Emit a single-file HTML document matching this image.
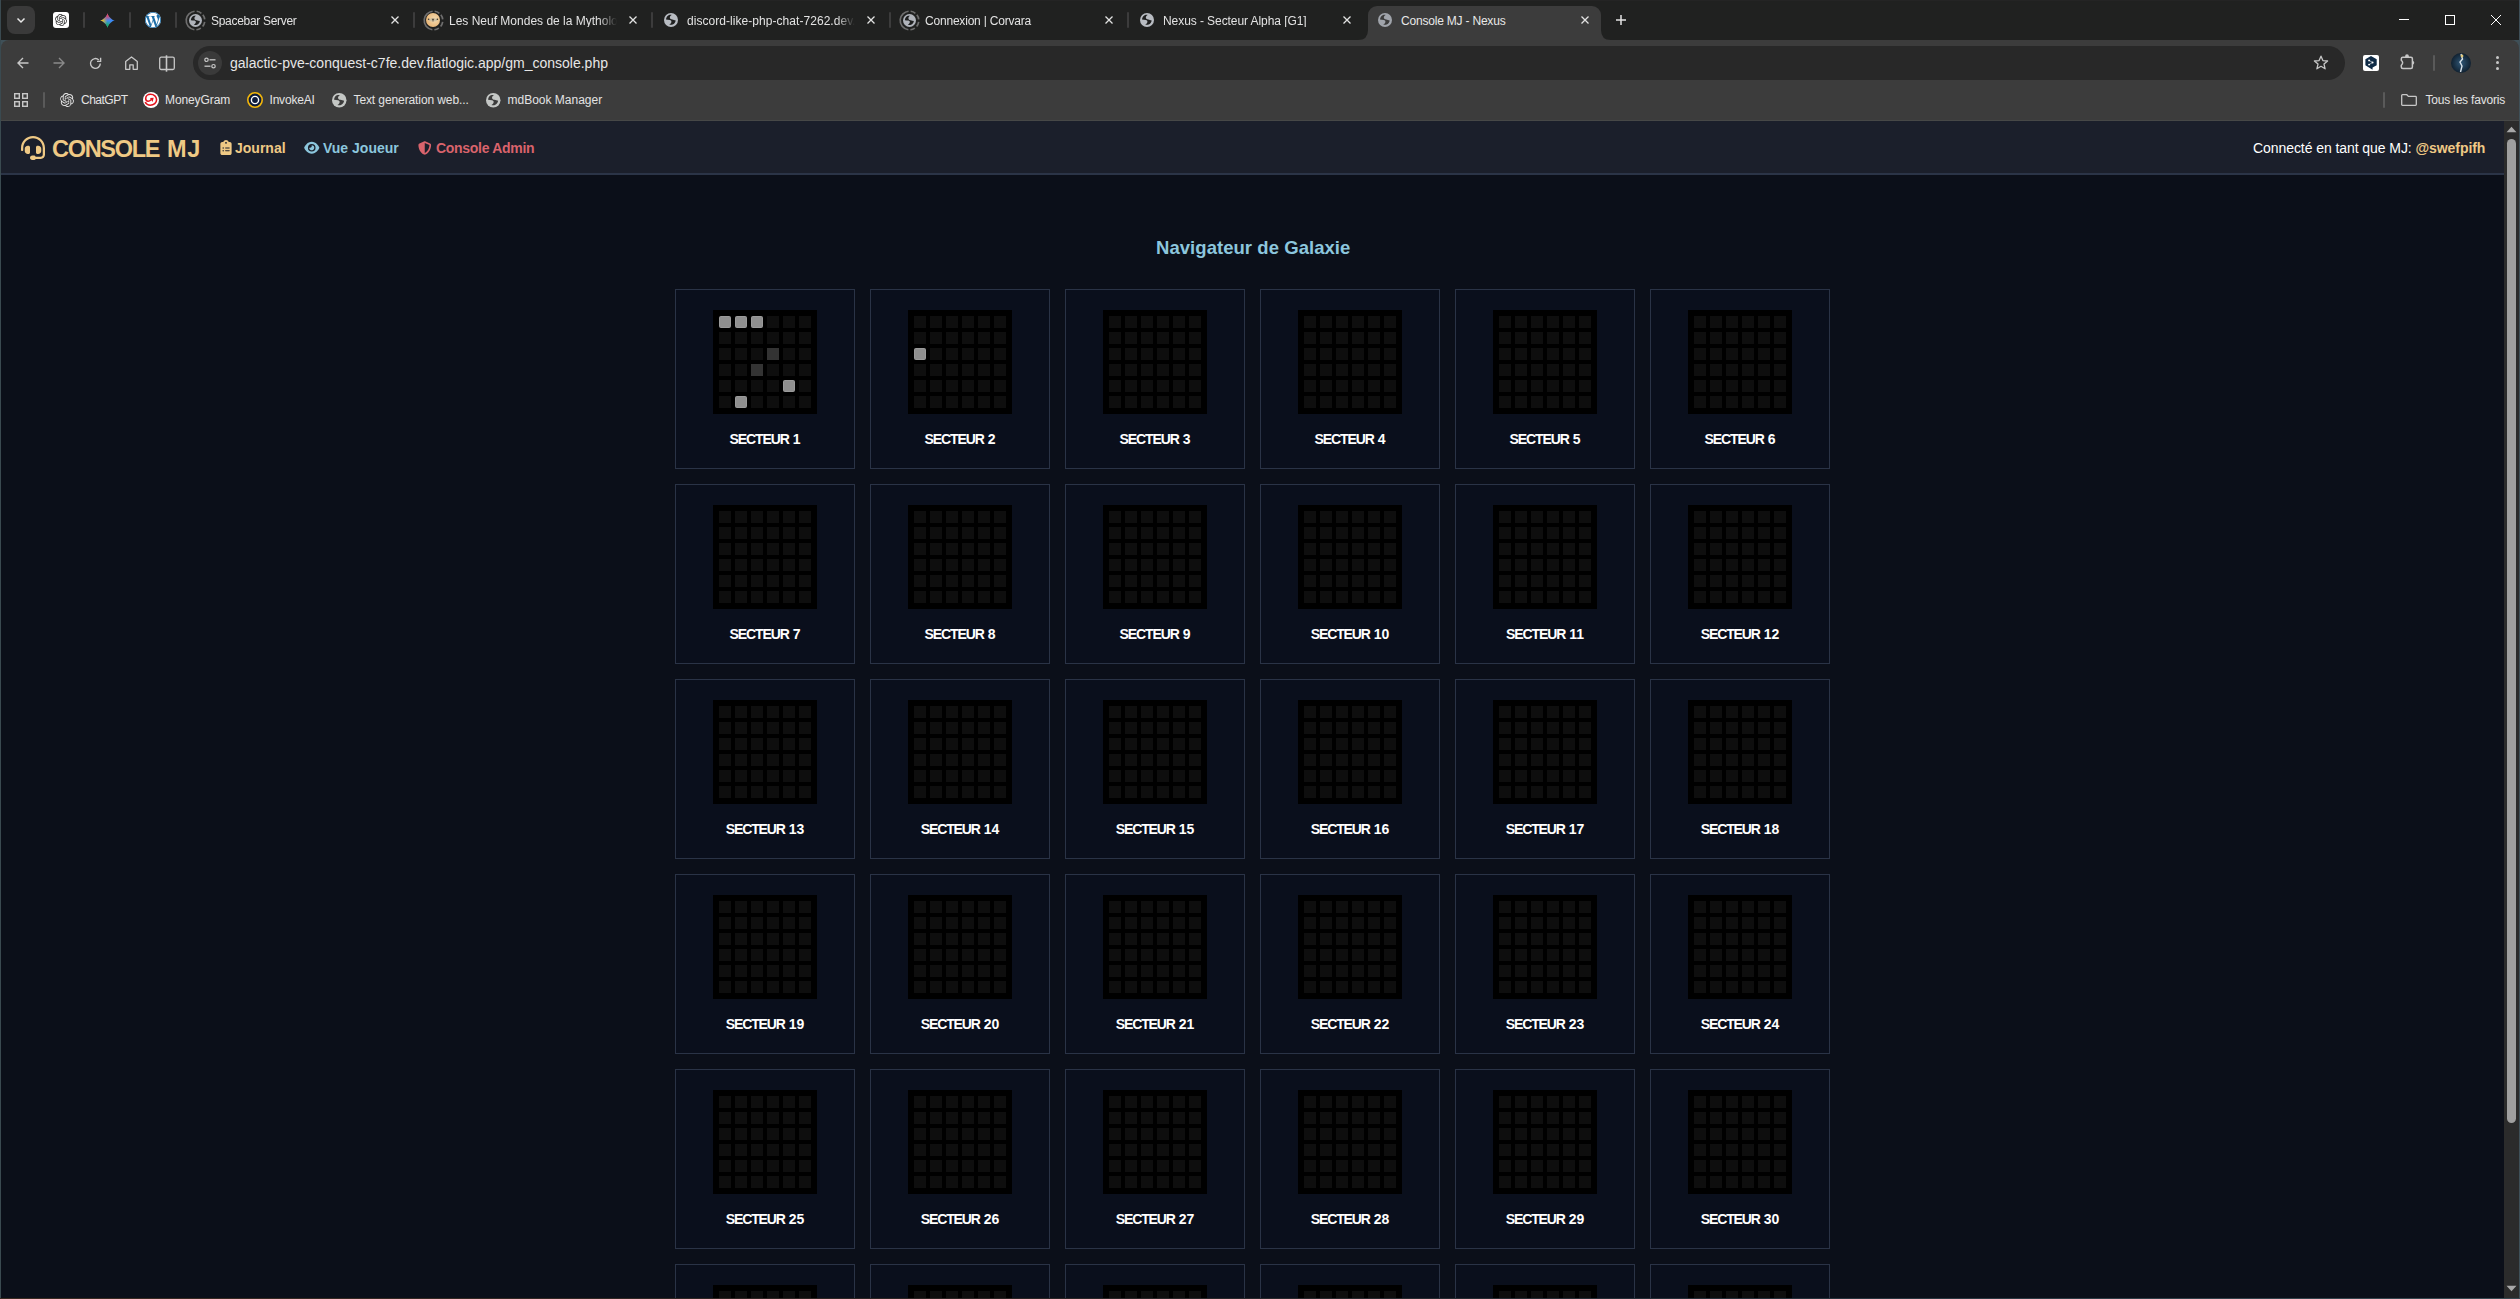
<!DOCTYPE html>
<html><head><meta charset="utf-8"><title>Console MJ - Nexus</title>
<style>
*{box-sizing:border-box;margin:0;padding:0}
html,body{width:2520px;height:1299px;overflow:hidden;background:#3f5058;font-family:"Liberation Sans",sans-serif}
.t{position:absolute;white-space:nowrap}
.a{position:absolute}
svg{position:absolute;overflow:visible}
</style></head><body>

<div class="a" style="left:0;top:0;width:1px;height:1299px;background:#3a4a50"></div>
<div class="a" style="left:1px;top:0;width:2518px;height:40px;background:#202120"></div>
<div class="a" style="left:1px;top:0;width:2518px;height:1px;background:#242424"></div>
<div class="a" style="left:0;top:1298px;width:2520px;height:1px;background:linear-gradient(90deg,#3a2a22,#2a2424 40%,#26303a 70%,#3a4a52)"></div>
<div class="a" style="left:1px;top:40px;width:2518px;height:81px;background:#3c3c3c;border-radius:8px 8px 0 0"></div>
<div class="a" style="left:1px;top:120px;width:2518px;height:1px;background:#474847"></div>
<div class="a" style="left:7px;top:6px;width:28px;height:28px;background:#3a3a3a;border-radius:8px"></div>
<svg style="left:15px;top:14px" width="12" height="12" viewBox="0 0 12 12"><path d="M2.5 4.5 L6 8 L9.5 4.5" fill="none" stroke="#e8e8e8" stroke-width="1.5"/></svg>
<div class="a" style="left:53px;top:12px;width:16px;height:16px;background:#fff;border-radius:3px"></div>
<svg style="left:55px;top:14px" width="12" height="12" viewBox="0 0 24 24"><path fill="#303030" d="M22.2819 9.8211a5.9847 5.9847 0 0 0-.5157-4.9108 6.0462 6.0462 0 0 0-6.5098-2.9A6.0651 6.0651 0 0 0 4.9807 4.1818a5.9847 5.9847 0 0 0-3.9977 2.9 6.0462 6.0462 0 0 0 .7427 7.0966 5.98 5.98 0 0 0 .511 4.9107 6.051 6.051 0 0 0 6.5146 2.9001A5.9847 5.9847 0 0 0 13.2599 24a6.0557 6.0557 0 0 0 5.7718-4.2058 5.9894 5.9894 0 0 0 3.9977-2.9001 6.0557 6.0557 0 0 0-.7475-7.0729zm-9.022 12.6081a4.4755 4.4755 0 0 1-2.8764-1.0408l.1419-.0804 4.7783-2.7582a.7948.7948 0 0 0 .3927-.6813v-6.7369l2.02 1.1686a.071.071 0 0 1 .038.052v5.5826a4.504 4.504 0 0 1-4.4945 4.4944zm-9.6607-4.1254a4.4708 4.4708 0 0 1-.5346-3.0137l.142.0852 4.783 2.7582a.7712.7712 0 0 0 .7806 0l5.8428-3.3685v2.3324a.0804.0804 0 0 1-.0332.0615L9.74 19.9502a4.4992 4.4992 0 0 1-6.1408-1.6464zM2.3408 7.8956a4.485 4.485 0 0 1 2.3655-1.9728V11.6a.7664.7664 0 0 0 .3879.6765l5.8144 3.3543-2.0201 1.1685a.0757.0757 0 0 1-.071 0l-4.8303-2.7865A4.504 4.504 0 0 1 2.3408 7.872zm16.5963 3.8558L13.1038 8.364 15.1192 7.2a.0757.0757 0 0 1 .071 0l4.8303 2.7913a4.4944 4.4944 0 0 1-.6765 8.1042v-5.6772a.79.79 0 0 0-.407-.667zm2.0107-3.0231l-.142-.0852-4.7735-2.7818a.7759.7759 0 0 0-.7854 0L9.409 9.2297V6.8974a.0662.0662 0 0 1 .0284-.0615l4.8303-2.7866a4.4992 4.4992 0 0 1 6.6802 4.66zM8.3065 12.863l-2.02-1.1638a.0804.0804 0 0 1-.038-.0567V6.0742a4.4992 4.4992 0 0 1 7.3757-3.4537l-.142.0805L8.704 5.459a.7948.7948 0 0 0-.3927.6813zm1.0976-2.3654l2.602-1.4998 2.6069 1.4998v2.9994l-2.5974 1.4997-2.6067-1.4997Z"/></svg>
<div class="a sep" style="left:83px;top:12px;width:2px;height:16px;background:#3c3c3c;border-radius:1px"></div>
<svg style="left:99.5px;top:12.5px" width="15" height="15" viewBox="0 0 16 16"><defs>
<clipPath id="gst"><path d="M8 0.2 C8.3 3.2 12.8 7.7 15.8 8 C12.8 8.3 8.3 12.8 8 15.8 C7.7 12.8 3.2 8.3 0.2 8 C3.2 7.7 7.7 3.2 8 0.2Z"/></clipPath>
<radialGradient id="gr1" cx="8" cy="0.5" r="8" gradientUnits="userSpaceOnUse"><stop offset="0.2" stop-color="#f43f4f"/><stop offset="1" stop-color="#f43f4f" stop-opacity="0"/></radialGradient>
<radialGradient id="gr2" cx="0.5" cy="8" r="7.5" gradientUnits="userSpaceOnUse"><stop offset="0.2" stop-color="#fdc108"/><stop offset="1" stop-color="#fdc108" stop-opacity="0"/></radialGradient>
<radialGradient id="gr3" cx="8" cy="15.5" r="7.5" gradientUnits="userSpaceOnUse"><stop offset="0.2" stop-color="#17b24f"/><stop offset="1" stop-color="#17b24f" stop-opacity="0"/></radialGradient>
</defs><g clip-path="url(#gst)"><rect width="16" height="16" fill="#3d8af5"/><rect width="16" height="16" fill="url(#gr3)"/><rect width="16" height="16" fill="url(#gr2)"/><rect width="16" height="16" fill="url(#gr1)"/></g></svg>
<div class="a" style="left:129px;top:12px;width:2px;height:16px;background:#3c3c3c;border-radius:1px"></div>
<svg style="left:145px;top:12px" width="16" height="16" viewBox="0 0 24 24"><circle cx="12" cy="12" r="12" fill="#fff"/><path fill="#1f6fa8" d="M21.469 6.825c.84 1.537 1.318 3.3 1.318 5.175 0 3.979-2.156 7.456-5.363 9.325l3.295-9.527c.615-1.54.82-2.771.82-3.864 0-.405-.026-.78-.07-1.11m-7.981.105c.647-.03 1.232-.105 1.232-.105.582-.075.514-.93-.067-.899 0 0-1.755.135-2.88.135-1.064 0-2.85-.15-2.85-.15-.585-.03-.661.855-.075.885 0 0 .54.061 1.125.09l1.68 4.605-2.37 7.08L5.354 6.9c.649-.03 1.234-.1 1.234-.1.585-.075.516-.93-.065-.896 0 0-1.746.138-2.874.138-.2 0-.438-.008-.69-.015C4.911 3.15 8.235 1.215 12 1.215c2.809 0 5.365 1.072 7.286 2.833-.046-.003-.091-.009-.141-.009-1.06 0-1.812.923-1.812 1.914 0 .89.513 1.643 1.06 2.531.411.72.89 1.643.89 2.977 0 .915-.354 1.994-.821 3.479l-1.075 3.585-3.9-11.61.001.014zM12 22.784c-1.059 0-2.081-.153-3.048-.437l3.237-9.406 3.315 9.087c.024.053.05.101.078.149-1.12.393-2.325.609-3.582.609M1.211 12c0-1.564.336-3.05.935-4.39L7.29 21.709C3.694 19.96 1.212 16.271 1.211 12M12 0C5.385 0 0 5.385 0 12s5.385 12 12 12 12-5.385 12-12S18.615 0 12 0"/></svg>
<div class="a" style="left:175px;top:12px;width:2px;height:16px;background:#3c3c3c;border-radius:1px"></div>
<svg style="left:184.5px;top:9.5px" width="21" height="21" viewBox="0 0 21 21"><circle cx="10.5" cy="10.5" r="9.3" fill="none" stroke="#6e6e6e" stroke-width="1.7" stroke-dasharray="26.94 2.11 5.19 2.11 4.87 2.60 5.03 2.43 4.71 2.27" transform="rotate(97 10.5 10.5)"/></svg>
<svg style="left:188.5px;top:13.5px" width="13" height="13" viewBox="0 0 14 14"><circle cx="7" cy="7" r="7" fill="#b0b4bb"/><path d="M2.0 6.6 C2.2 4.6 3.0 3.0 4.6 2.2 C5.6 1.8 6.8 1.8 7.7 1.9 C6.4 2.6 5.6 3.8 5.9 5.0 C6.1 5.8 6.9 6.3 8.2 6.6 C9.4 6.9 10.6 7.2 11.7 7.5 C11.5 9.3 10.3 10.9 8.6 11.6 C7.5 12.0 6.2 11.9 5.2 11.5 C6.4 11.0 7.3 10.0 7.4 8.7 C7.4 7.9 6.8 7.4 5.8 7.1 C4.6 6.8 3.2 6.7 2.0 6.6 Z" fill="#1f2020"/></svg>
<div class="t" style="left:211px;top:15.04px;font-size:12px;line-height:12px;color:#e3e3e3;font-weight:normal;letter-spacing:-0.3px;width:168px;overflow:hidden;-webkit-mask-image:linear-gradient(90deg,#000 150px,transparent 168px);">Spacebar Server</div>
<svg style="left:391px;top:16px" width="8" height="8" viewBox="0 0 8 8"><path d="M0.5 0.5 L7.5 7.5 M7.5 0.5 L0.5 7.5" stroke="#e3e3e3" stroke-width="1.3" fill="none"/></svg>
<svg style="left:422.5px;top:9.5px" width="21" height="21" viewBox="0 0 21 21"><circle cx="10.5" cy="10.5" r="9.3" fill="none" stroke="#6e6e6e" stroke-width="1.7" stroke-dasharray="26.94 2.11 5.19 2.11 4.87 2.60 5.03 2.43 4.71 2.27" transform="rotate(97 10.5 10.5)"/></svg>
<svg style="left:426px;top:13px" width="14" height="14" viewBox="0 0 14 14"><defs><radialGradient id="fc" cx="0.6" cy="0.45" r="0.6"><stop offset="0" stop-color="#f3dcb4"/><stop offset="1" stop-color="#e9b676"/></radialGradient></defs><circle cx="7" cy="7" r="7" fill="url(#fc)"/><ellipse cx="7" cy="6.8" rx="4.6" ry="1.6" fill="#c9bfa2" opacity="0.8"/><circle cx="2.6" cy="6.2" r="0.8" fill="#3a3328"/><circle cx="11.4" cy="6.2" r="0.8" fill="#3a3328"/><path d="M5.6 5.8 H8.4 L7.4 7.4 V8.6 H6.6 V7.4 Z" fill="#5a4a38"/></svg>
<div class="t" style="left:449px;top:15.04px;font-size:12px;line-height:12px;color:#e3e3e3;font-weight:normal;width:168px;overflow:hidden;-webkit-mask-image:linear-gradient(90deg,#000 150px,transparent 168px);">Les Neuf Mondes de la Mythologie</div>
<svg style="left:629px;top:16px" width="8" height="8" viewBox="0 0 8 8"><path d="M0.5 0.5 L7.5 7.5 M7.5 0.5 L0.5 7.5" stroke="#e3e3e3" stroke-width="1.3" fill="none"/></svg>
<svg style="left:664.0px;top:13.0px" width="14" height="14" viewBox="0 0 14 14"><circle cx="7" cy="7" r="7" fill="#b8bcc2"/><path d="M2.0 6.6 C2.2 4.6 3.0 3.0 4.6 2.2 C5.6 1.8 6.8 1.8 7.7 1.9 C6.4 2.6 5.6 3.8 5.9 5.0 C6.1 5.8 6.9 6.3 8.2 6.6 C9.4 6.9 10.6 7.2 11.7 7.5 C11.5 9.3 10.3 10.9 8.6 11.6 C7.5 12.0 6.2 11.9 5.2 11.5 C6.4 11.0 7.3 10.0 7.4 8.7 C7.4 7.9 6.8 7.4 5.8 7.1 C4.6 6.8 3.2 6.7 2.0 6.6 Z" fill="#1f2020"/></svg>
<div class="t" style="left:687px;top:15.04px;font-size:12px;line-height:12px;color:#e3e3e3;font-weight:normal;letter-spacing:0.05px;width:168px;overflow:hidden;-webkit-mask-image:linear-gradient(90deg,#000 150px,transparent 168px);">discord-like-php-chat-7262.dev.flatlogic.app</div>
<svg style="left:867px;top:16px" width="8" height="8" viewBox="0 0 8 8"><path d="M0.5 0.5 L7.5 7.5 M7.5 0.5 L0.5 7.5" stroke="#e3e3e3" stroke-width="1.3" fill="none"/></svg>
<svg style="left:898.5px;top:9.5px" width="21" height="21" viewBox="0 0 21 21"><circle cx="10.5" cy="10.5" r="9.3" fill="none" stroke="#6e6e6e" stroke-width="1.7" stroke-dasharray="26.94 2.11 5.19 2.11 4.87 2.60 5.03 2.43 4.71 2.27" transform="rotate(97 10.5 10.5)"/></svg>
<svg style="left:902.5px;top:13.5px" width="13" height="13" viewBox="0 0 14 14"><circle cx="7" cy="7" r="7" fill="#b0b4bb"/><path d="M2.0 6.6 C2.2 4.6 3.0 3.0 4.6 2.2 C5.6 1.8 6.8 1.8 7.7 1.9 C6.4 2.6 5.6 3.8 5.9 5.0 C6.1 5.8 6.9 6.3 8.2 6.6 C9.4 6.9 10.6 7.2 11.7 7.5 C11.5 9.3 10.3 10.9 8.6 11.6 C7.5 12.0 6.2 11.9 5.2 11.5 C6.4 11.0 7.3 10.0 7.4 8.7 C7.4 7.9 6.8 7.4 5.8 7.1 C4.6 6.8 3.2 6.7 2.0 6.6 Z" fill="#1f2020"/></svg>
<div class="t" style="left:925px;top:15.04px;font-size:12px;line-height:12px;color:#e3e3e3;font-weight:normal;letter-spacing:-0.2px;width:168px;overflow:hidden;-webkit-mask-image:linear-gradient(90deg,#000 150px,transparent 168px);">Connexion | Corvara</div>
<svg style="left:1105px;top:16px" width="8" height="8" viewBox="0 0 8 8"><path d="M0.5 0.5 L7.5 7.5 M7.5 0.5 L0.5 7.5" stroke="#e3e3e3" stroke-width="1.3" fill="none"/></svg>
<svg style="left:1140.0px;top:13.0px" width="14" height="14" viewBox="0 0 14 14"><circle cx="7" cy="7" r="7" fill="#b8bcc2"/><path d="M2.0 6.6 C2.2 4.6 3.0 3.0 4.6 2.2 C5.6 1.8 6.8 1.8 7.7 1.9 C6.4 2.6 5.6 3.8 5.9 5.0 C6.1 5.8 6.9 6.3 8.2 6.6 C9.4 6.9 10.6 7.2 11.7 7.5 C11.5 9.3 10.3 10.9 8.6 11.6 C7.5 12.0 6.2 11.9 5.2 11.5 C6.4 11.0 7.3 10.0 7.4 8.7 C7.4 7.9 6.8 7.4 5.8 7.1 C4.6 6.8 3.2 6.7 2.0 6.6 Z" fill="#1f2020"/></svg>
<div class="t" style="left:1163px;top:15.04px;font-size:12px;line-height:12px;color:#e3e3e3;font-weight:normal;letter-spacing:-0.07px;width:168px;overflow:hidden;-webkit-mask-image:linear-gradient(90deg,#000 150px,transparent 168px);">Nexus - Secteur Alpha [G1]</div>
<svg style="left:1343px;top:16px" width="8" height="8" viewBox="0 0 8 8"><path d="M0.5 0.5 L7.5 7.5 M7.5 0.5 L0.5 7.5" stroke="#e3e3e3" stroke-width="1.3" fill="none"/></svg>
<div class="a" style="left:413px;top:12px;width:2px;height:16px;background:#3c3c3c;border-radius:1px"></div>
<div class="a" style="left:651px;top:12px;width:2px;height:16px;background:#3c3c3c;border-radius:1px"></div>
<div class="a" style="left:889px;top:12px;width:2px;height:16px;background:#3c3c3c;border-radius:1px"></div>
<div class="a" style="left:1127px;top:12px;width:2px;height:16px;background:#3c3c3c;border-radius:1px"></div>
<div class="a" style="left:1368px;top:6px;width:233px;height:34px;background:#3c3c3c;border-radius:9px 9px 0 0"></div>
<svg style="left:1358px;top:30px" width="10" height="10" viewBox="0 0 10 10"><path d="M0 10 Q10 10 10 0 L10 10Z" fill="#3c3c3c"/></svg>
<svg style="left:1601px;top:30px" width="10" height="10" viewBox="0 0 10 10"><path d="M10 10 Q0 10 0 0 L0 10Z" fill="#3c3c3c"/></svg>
<svg style="left:1378.0px;top:13.0px" width="14" height="14" viewBox="0 0 14 14"><circle cx="7" cy="7" r="7" fill="#a0a4ab"/><path d="M2.0 6.6 C2.2 4.6 3.0 3.0 4.6 2.2 C5.6 1.8 6.8 1.8 7.7 1.9 C6.4 2.6 5.6 3.8 5.9 5.0 C6.1 5.8 6.9 6.3 8.2 6.6 C9.4 6.9 10.6 7.2 11.7 7.5 C11.5 9.3 10.3 10.9 8.6 11.6 C7.5 12.0 6.2 11.9 5.2 11.5 C6.4 11.0 7.3 10.0 7.4 8.7 C7.4 7.9 6.8 7.4 5.8 7.1 C4.6 6.8 3.2 6.7 2.0 6.6 Z" fill="#3c3c3c"/></svg>
<div class="t" style="left:1401px;top:15.04px;font-size:12px;line-height:12px;color:#e8e8e8;font-weight:normal;letter-spacing:-0.2px;">Console MJ - Nexus</div>
<svg style="left:1581px;top:16px" width="8" height="8" viewBox="0 0 8 8"><path d="M0.5 0.5 L7.5 7.5 M7.5 0.5 L0.5 7.5" stroke="#e3e3e3" stroke-width="1.3" fill="none"/></svg>
<svg style="left:1616px;top:15px" width="10" height="10" viewBox="0 0 10 10"><path d="M5 0 V10 M0 5 H10" stroke="#e3e3e3" stroke-width="1.5"/></svg>
<div class="a" style="left:2399px;top:19px;width:10px;height:1px;background:#fff"></div>
<div class="a" style="left:2445px;top:15px;width:10px;height:10px;border:1px solid #fff"></div>
<svg style="left:2491px;top:15px" width="10" height="10" viewBox="0 0 10 10"><path d="M0 0 L10 10 M10 0 L0 10" stroke="#fff" stroke-width="1"/></svg>
<svg style="left:17px;top:57px" width="12" height="12" viewBox="0 0 12 12"><path d="M11.5 6 H1.2 M6 1 L1 6 L6 11" fill="none" stroke="#c7c7c7" stroke-width="1.4"/></svg>
<svg style="left:53px;top:57px" width="12" height="12" viewBox="0 0 12 12"><path d="M0.5 6 H10.8 M6 1 L11 6 L6 11" fill="none" stroke="#8a8a8a" stroke-width="1.4"/></svg>
<svg style="left:89px;top:57px" width="13" height="13" viewBox="0 0 13 13"><path d="M11.3 6.5 A4.9 4.9 0 1 1 9.8 2.9" fill="none" stroke="#c7c7c7" stroke-width="1.4"/><path d="M11.6 0.8 V4.4 H8" fill="none" stroke="#c7c7c7" stroke-width="1.4"/></svg>
<svg style="left:125px;top:56px" width="13" height="14" viewBox="0 0 13 14"><path d="M0.7 13.3 V5.6 L6.5 0.9 L12.3 5.6 V13.3 H8.2 V8.8 H4.8 V13.3 Z" fill="none" stroke="#c7c7c7" stroke-width="1.3" stroke-linejoin="round"/></svg>
<svg style="left:159px;top:55px" width="16" height="17" viewBox="0 0 16 17"><rect x="0.7" y="2.2" width="14.6" height="12.3" rx="1.5" fill="none" stroke="#c7c7c7" stroke-width="1.3"/><path d="M7.5 0.3 V16.7" stroke="#c7c7c7" stroke-width="1.6"/><rect x="8.2" y="2.8" width="0" height="0"/></svg>
<div class="a" style="left:193px;top:46px;width:2152px;height:34px;background:#282828;border-radius:17px"></div>
<div class="a" style="left:198px;top:51px;width:24px;height:24px;background:#3a3a3a;border-radius:12px"></div>
<svg style="left:203px;top:56px" width="14" height="14" viewBox="0 0 14 14"><circle cx="3.5" cy="3.8" r="1.7" fill="none" stroke="#c7c7c7" stroke-width="1.2"/><path d="M6.5 3.8 H12.5" stroke="#c7c7c7" stroke-width="1.3"/><circle cx="10.5" cy="10.2" r="1.7" fill="none" stroke="#c7c7c7" stroke-width="1.2"/><path d="M1.5 10.2 H7.5" stroke="#c7c7c7" stroke-width="1.3"/></svg>
<div class="t" style="left:230px;top:56.35px;font-size:14px;line-height:14px;color:#e6e6e6;font-weight:normal;">galactic-pve-conquest-c7fe.dev.flatlogic.app/gm_console.php</div>
<svg style="left:2313px;top:55px" width="16" height="16" viewBox="0 0 16 16"><path d="M8 1.2 L9.9 5.6 L14.6 6 L11 9.1 L12.1 13.8 L8 11.3 L3.9 13.8 L5 9.1 L1.4 6 L6.1 5.6 Z" fill="none" stroke="#c7c7c7" stroke-width="1.3" stroke-linejoin="round"/></svg>
<div class="a" style="left:2363px;top:55px;width:16px;height:16px;background:#fff;border-radius:2px"></div>
<svg style="left:2363px;top:55px" width="16" height="16" viewBox="0 0 16 16"><path d="M8 1 L13.7 4.2 V10.3 L9.6 12.6 L9.5 14.8 L7.6 13.4 L2.4 10.3 V4.2 Z" fill="#0f2b46"/><path d="M6.1 5.4 L9.6 7.5 L6.1 9.6" fill="none" stroke="#fff" stroke-width="0.6"/><circle cx="6.1" cy="5.4" r="0.95" fill="#fff"/><circle cx="6.1" cy="9.6" r="0.95" fill="#fff"/><circle cx="9.6" cy="7.5" r="0.95" fill="#fff"/></svg>
<svg style="left:2399px;top:53px" width="18" height="18" viewBox="0 0 18 18"><path d="M3.8 4.2 H11.9 Q13.4 4.2 13.4 5.7 V14 Q13.4 15.5 11.9 15.5 H3.8 Q2.3 15.5 2.3 14 V12.3 Q5.0 9.8 2.3 7.3 V5.7 Q2.3 4.2 3.8 4.2 Z" fill="none" stroke="#c7c7c7" stroke-width="1.5"/><path d="M6.1 4.5 V3.2 A1.9 1.9 0 0 1 9.9 3.2 V4.5 Z M13.2 7.3 Q17.4 9.8 13.2 12.3 Z" fill="#c7c7c7"/></svg>
<div class="a" style="left:2433px;top:55px;width:2px;height:16px;background:#5a5a5a;border-radius:1px"></div>
<svg style="left:2451px;top:53px" width="20" height="20" viewBox="0 0 20 20"><defs><radialGradient id="av" cx="0.5" cy="0.5" r="0.6"><stop offset="0" stop-color="#2f5676"/><stop offset="1" stop-color="#0a1622"/></radialGradient></defs><circle cx="10" cy="10" r="10" fill="url(#av)"/><path d="M10 1 L11.5 6 L9 9 L11 13 L9.5 19" fill="none" stroke="#d8e2ea" stroke-width="1.4"/><circle cx="11" cy="3" r="1.4" fill="#e0c87a"/></svg>
<div class="a" style="left:2495.5px;top:55.8px;width:3px;height:3px;border-radius:50%;background:#c7c7c7"></div>
<div class="a" style="left:2495.5px;top:61.3px;width:3px;height:3px;border-radius:50%;background:#c7c7c7"></div>
<div class="a" style="left:2495.5px;top:66.8px;width:3px;height:3px;border-radius:50%;background:#c7c7c7"></div>
<svg style="left:14px;top:93px" width="14" height="14" viewBox="0 0 14 14"><g fill="none" stroke="#c7c7c7" stroke-width="1.4"><rect x="0.7" y="0.7" width="4.6" height="4.6"/><rect x="8.7" y="0.7" width="4.6" height="4.6"/><rect x="0.7" y="8.7" width="4.6" height="4.6"/><rect x="8.7" y="8.7" width="4.6" height="4.6"/></g></svg>
<div class="a" style="left:43px;top:92px;width:2px;height:16px;background:#5a5a5a;border-radius:1px"></div>
<svg style="left:60px;top:93px" width="14" height="14" viewBox="0 0 24 24"><path fill="#e8e8e8" d="M22.2819 9.8211a5.9847 5.9847 0 0 0-.5157-4.9108 6.0462 6.0462 0 0 0-6.5098-2.9A6.0651 6.0651 0 0 0 4.9807 4.1818a5.9847 5.9847 0 0 0-3.9977 2.9 6.0462 6.0462 0 0 0 .7427 7.0966 5.98 5.98 0 0 0 .511 4.9107 6.051 6.051 0 0 0 6.5146 2.9001A5.9847 5.9847 0 0 0 13.2599 24a6.0557 6.0557 0 0 0 5.7718-4.2058 5.9894 5.9894 0 0 0 3.9977-2.9001 6.0557 6.0557 0 0 0-.7475-7.0729zm-9.022 12.6081a4.4755 4.4755 0 0 1-2.8764-1.0408l.1419-.0804 4.7783-2.7582a.7948.7948 0 0 0 .3927-.6813v-6.7369l2.02 1.1686a.071.071 0 0 1 .038.052v5.5826a4.504 4.504 0 0 1-4.4945 4.4944zm-9.6607-4.1254a4.4708 4.4708 0 0 1-.5346-3.0137l.142.0852 4.783 2.7582a.7712.7712 0 0 0 .7806 0l5.8428-3.3685v2.3324a.0804.0804 0 0 1-.0332.0615L9.74 19.9502a4.4992 4.4992 0 0 1-6.1408-1.6464zM2.3408 7.8956a4.485 4.485 0 0 1 2.3655-1.9728V11.6a.7664.7664 0 0 0 .3879.6765l5.8144 3.3543-2.0201 1.1685a.0757.0757 0 0 1-.071 0l-4.8303-2.7865A4.504 4.504 0 0 1 2.3408 7.872zm16.5963 3.8558L13.1038 8.364 15.1192 7.2a.0757.0757 0 0 1 .071 0l4.8303 2.7913a4.4944 4.4944 0 0 1-.6765 8.1042v-5.6772a.79.79 0 0 0-.407-.667zm2.0107-3.0231l-.142-.0852-4.7735-2.7818a.7759.7759 0 0 0-.7854 0L9.409 9.2297V6.8974a.0662.0662 0 0 1 .0284-.0615l4.8303-2.7866a4.4992 4.4992 0 0 1 6.6802 4.66zM8.3065 12.863l-2.02-1.1638a.0804.0804 0 0 1-.038-.0567V6.0742a4.4992 4.4992 0 0 1 7.3757-3.4537l-.142.0805L8.704 5.459a.7948.7948 0 0 0-.3927.6813zm1.0976-2.3654l2.602-1.4998 2.6069 1.4998v2.9994l-2.5974 1.4997-2.6067-1.4997Z"/></svg>
<div class="t" style="left:81px;top:93.54px;font-size:12px;line-height:12px;color:#e3e3e3;font-weight:normal;letter-spacing:-0.5px;">ChatGPT</div>
<svg style="left:143px;top:92px" width="16" height="16" viewBox="0 0 16 16"><circle cx="8" cy="8" r="8" fill="#fff"/><path d="M2.1 10.2 C3.5 12.5 5.5 13.3 7.2 13.3 C10.8 13.3 13.6 10.8 13.6 7.8 C13.6 4.5 11 2.3 7.5 2.3 C4.6 2.3 2.7 4.3 2.7 6.5 C2.7 8.2 3.8 9.2 5.1 9.2 C6.4 9.2 7.4 8.4 8.4 7.5" fill="none" stroke="#e4111b" stroke-width="1.55"/><path d="M7.0 6.0 L10.7 5.7 L9.6 9.9Z" fill="#e4111b"/></svg>
<div class="t" style="left:165px;top:93.54px;font-size:12px;line-height:12px;color:#e3e3e3;font-weight:normal;letter-spacing:-0.1px;">MoneyGram</div>
<svg style="left:247px;top:92px" width="16" height="16" viewBox="0 0 16 16"><circle cx="8" cy="8" r="7.2" fill="#0d1a3a" stroke="#f3b70b" stroke-width="1.6"/><circle cx="8" cy="8" r="3.6" fill="none" stroke="#fff" stroke-width="1.4"/></svg>
<div class="t" style="left:269.5px;top:93.54px;font-size:12px;line-height:12px;color:#e3e3e3;font-weight:normal;letter-spacing:-0.2px;">InvokeAI</div>
<svg style="left:331.75px;top:92.75px" width="14.5" height="14.5" viewBox="0 0 14 14"><circle cx="7" cy="7" r="7" fill="#c4c7c5"/><path d="M2.0 6.6 C2.2 4.6 3.0 3.0 4.6 2.2 C5.6 1.8 6.8 1.8 7.7 1.9 C6.4 2.6 5.6 3.8 5.9 5.0 C6.1 5.8 6.9 6.3 8.2 6.6 C9.4 6.9 10.6 7.2 11.7 7.5 C11.5 9.3 10.3 10.9 8.6 11.6 C7.5 12.0 6.2 11.9 5.2 11.5 C6.4 11.0 7.3 10.0 7.4 8.7 C7.4 7.9 6.8 7.4 5.8 7.1 C4.6 6.8 3.2 6.7 2.0 6.6 Z" fill="#3c3c3c"/></svg>
<div class="t" style="left:353.5px;top:93.54px;font-size:12px;line-height:12px;color:#e3e3e3;font-weight:normal;letter-spacing:-0.1px;">Text generation web...</div>
<svg style="left:485.75px;top:92.75px" width="14.5" height="14.5" viewBox="0 0 14 14"><circle cx="7" cy="7" r="7" fill="#c4c7c5"/><path d="M2.0 6.6 C2.2 4.6 3.0 3.0 4.6 2.2 C5.6 1.8 6.8 1.8 7.7 1.9 C6.4 2.6 5.6 3.8 5.9 5.0 C6.1 5.8 6.9 6.3 8.2 6.6 C9.4 6.9 10.6 7.2 11.7 7.5 C11.5 9.3 10.3 10.9 8.6 11.6 C7.5 12.0 6.2 11.9 5.2 11.5 C6.4 11.0 7.3 10.0 7.4 8.7 C7.4 7.9 6.8 7.4 5.8 7.1 C4.6 6.8 3.2 6.7 2.0 6.6 Z" fill="#3c3c3c"/></svg>
<div class="t" style="left:507.5px;top:93.54px;font-size:12px;line-height:12px;color:#e3e3e3;font-weight:normal;">mdBook Manager</div>
<div class="a" style="left:2383px;top:92px;width:2px;height:16px;background:#5a5a5a;border-radius:1px"></div>
<svg style="left:2401px;top:94px" width="16" height="12" viewBox="0 0 16 12"><path d="M0.7 1.5 Q0.7 0.7 1.5 0.7 H5.8 L7.4 2.4 H14.5 Q15.3 2.4 15.3 3.2 V10.5 Q15.3 11.3 14.5 11.3 H1.5 Q0.7 11.3 0.7 10.5 Z" fill="none" stroke="#c7c7c7" stroke-width="1.3"/></svg>
<div class="t" style="left:2425.5px;top:93.54px;font-size:12px;line-height:12px;color:#e3e3e3;font-weight:normal;letter-spacing:-0.2px;">Tous les favoris</div>
<div class="a" style="left:1px;top:121px;width:2503px;height:1177px;background:#0b0f19;overflow:hidden">
<div class="a" style="left:0;top:0;width:2503px;height:52px;background:#1b1f2b"></div>
<div class="a" style="left:0;top:52px;width:2503px;height:2px;background:#2b3447"></div>
<svg style="left:20px;top:15px" width="24" height="24" viewBox="0 0 512 512"><path fill="#efc985" d="M256 48C141.1 48 48 141.1 48 256v40c0 13.3-10.7 24-24 24S0 309.3 0 296V256C0 114.6 114.6 0 256 0S512 114.6 512 256V400.1c0 48.6-39.4 88-88.1 88L313.6 488c-8.3 14.3-23.8 24-41.6 24H240c-26.5 0-48-21.5-48-48s21.5-48 48-48h32c17.8 0 33.3 9.7 41.6 24l110.4 .1c22.1 0 40-17.9 40-40V256c0-114.9-93.1-208-208-208zM144 208h16c17.7 0 32 14.3 32 32V352c0 17.7-14.3 32-32 32H144c-35.3 0-64-28.7-64-64V272c0-35.3 28.7-64 64-64zm224 0c35.3 0 64 28.7 64 64v48c0 35.3-28.7 64-64 64H352c-17.7 0-32-14.3-32-32V240c0-17.7 14.3-32 32-32h16z"/></svg>
<div class="t" style="left:51px;top:17.11px;font-size:23.5px;line-height:23.5px;color:#efc985;font-weight:bold;"><span style="letter-spacing:-1.3px">CONSOLE</span> <span style="letter-spacing:0.7px;margin-left:1.3px">MJ</span></div>
<svg style="left:219px;top:19px" width="12" height="15" viewBox="0 0 384 512"><path fill="#efc985" d="M192 0c-41.8 0-77.4 26.7-90.5 64H64C28.7 64 0 92.7 0 128V448c0 35.3 28.7 64 64 64H320c35.3 0 64-28.7 64-64V128c0-35.3-28.7-64-64-64H282.5C269.4 26.7 233.8 0 192 0zm0 64a32 32 0 1 1 0 64 32 32 0 1 1 0-64zM72 272a24 24 0 1 1 48 0 24 24 0 1 1 -48 0zm104-16H304c8.8 0 16 7.2 16 16s-7.2 16-16 16H176c-8.8 0-16-7.2-16-16s7.2-16 16-16zM72 368a24 24 0 1 1 48 0 24 24 0 1 1 -48 0zm88 0c0-8.8 7.2-16 16-16H304c8.8 0 16 7.2 16 16s-7.2 16-16 16H176c-8.8 0-16-7.2-16-16z"/></svg>
<div class="t" style="left:234px;top:19.75px;font-size:14px;line-height:14px;color:#efc985;font-weight:bold;">Journal</div>
<svg style="left:302px;top:20px" width="17.5" height="13.5" viewBox="0 0 576 512"><path fill="#8cc6dd" d="M288 32c-80.8 0-145.5 36.8-192.6 80.6C48.6 156 17.3 208 2.5 243.7c-3.3 7.9-3.3 16.7 0 24.6C17.3 304 48.6 356 95.4 399.4C142.5 443.2 207.2 480 288 480s145.5-36.8 192.6-80.6c46.8-43.5 78.1-95.4 93-131.1c3.3-7.9 3.3-16.7 0-24.6c-14.9-35.7-46.2-87.7-93-131.1C433.5 68.8 368.8 32 288 32zM144 256a144 144 0 1 1 288 0 144 144 0 1 1 -288 0zm144-64c0 35.3-28.7 64-64 64c-7.1 0-13.9-1.2-20.3-3.300c-5.5-1.8-11.9 1.6-11.7 7.4c.3 6.9 1.3 13.8 3.2 20.7c13.7 51.2 66.4 81.6 117.600 67.9s81.6-66.4 67.9-117.6c-11.1-41.5-47.8-69.4-88.6-71.1c-5.8-.2-9.2 6.1-7.4 11.7c2.1 6.4 3.3 13.2 3.3 20.3z"/></svg>
<div class="t" style="left:322px;top:19.75px;font-size:14px;line-height:14px;color:#8cc6dd;font-weight:bold;">Vue Joueur</div>
<svg style="left:416.5px;top:20px" width="13.5" height="14" viewBox="0 0 512 512"><path fill="#d9636c" d="M256 0c4.6 0 9.2 1 13.4 2.9L457.7 82.8c22 9.3 38.4 31 38.3 57.2c-.5 99.2-41.3 280.7-213.6 363.2c-16.7 8-36.1 8-52.8 0C57.3 420.7 16.5 239.2 16 140c-.1-26.2 16.3-47.9 38.3-57.2L242.7 2.9C246.8 1 251.4 0 256 0zm0 66.8V444.8C394 378 431.1 230.1 432 141.4L256 66.8l0 0z"/></svg>
<div class="t" style="left:435px;top:19.75px;font-size:14px;line-height:14px;color:#d9636c;font-weight:bold;letter-spacing:-0.3px;">Console Admin</div>
<div class="t" style="left:2252px;top:19.95px;font-size:14px;line-height:14px;color:#ffffff;font-weight:normal;letter-spacing:-0.07px;">Connecté en tant que MJ: <b style="color:#efc985">@swefpifh</b></div>
<div class="t" style="left:1155px;top:118.04px;font-size:18.5px;line-height:18.5px;color:#8cc6dd;font-weight:bold;letter-spacing:0.05px;">Navigateur de Galaxie</div>
<div class="a" style="left:674px;top:168px;width:180px;height:180px;border:1px solid #2a3346;background:#0a0f1c">
<div class="a" style="left:37px;top:20px;width:104px;height:104px;background:#000">
<div class="a" style="left:6px;top:6px;width:12px;height:12px;background:#8f8f8f;border:1px solid #9a9a9a;border-radius:1.5px"></div>
<div class="a" style="left:22px;top:6px;width:12px;height:12px;background:#8f8f8f;border:1px solid #9a9a9a;border-radius:1.5px"></div>
<div class="a" style="left:38px;top:6px;width:12px;height:12px;background:#8f8f8f;border:1px solid #9a9a9a;border-radius:1.5px"></div>
<div class="a" style="left:54px;top:6px;width:12px;height:12px;background:#0e0e0e"></div>
<div class="a" style="left:70px;top:6px;width:12px;height:12px;background:#0e0e0e"></div>
<div class="a" style="left:86px;top:6px;width:12px;height:12px;background:#0e0e0e"></div>
<div class="a" style="left:6px;top:22px;width:12px;height:12px;background:#0e0e0e"></div>
<div class="a" style="left:22px;top:22px;width:12px;height:12px;background:#0e0e0e"></div>
<div class="a" style="left:38px;top:22px;width:12px;height:12px;background:#0e0e0e"></div>
<div class="a" style="left:54px;top:22px;width:12px;height:12px;background:#0e0e0e"></div>
<div class="a" style="left:70px;top:22px;width:12px;height:12px;background:#0e0e0e"></div>
<div class="a" style="left:86px;top:22px;width:12px;height:12px;background:#0e0e0e"></div>
<div class="a" style="left:6px;top:38px;width:12px;height:12px;background:#0e0e0e"></div>
<div class="a" style="left:22px;top:38px;width:12px;height:12px;background:#0e0e0e"></div>
<div class="a" style="left:38px;top:38px;width:12px;height:12px;background:#0e0e0e"></div>
<div class="a" style="left:54px;top:38px;width:12px;height:12px;background:#333333"></div>
<div class="a" style="left:70px;top:38px;width:12px;height:12px;background:#0e0e0e"></div>
<div class="a" style="left:86px;top:38px;width:12px;height:12px;background:#0e0e0e"></div>
<div class="a" style="left:6px;top:54px;width:12px;height:12px;background:#0e0e0e"></div>
<div class="a" style="left:22px;top:54px;width:12px;height:12px;background:#0e0e0e"></div>
<div class="a" style="left:38px;top:54px;width:12px;height:12px;background:#333333"></div>
<div class="a" style="left:54px;top:54px;width:12px;height:12px;background:#0e0e0e"></div>
<div class="a" style="left:70px;top:54px;width:12px;height:12px;background:#0e0e0e"></div>
<div class="a" style="left:86px;top:54px;width:12px;height:12px;background:#0e0e0e"></div>
<div class="a" style="left:6px;top:70px;width:12px;height:12px;background:#0e0e0e"></div>
<div class="a" style="left:22px;top:70px;width:12px;height:12px;background:#0e0e0e"></div>
<div class="a" style="left:38px;top:70px;width:12px;height:12px;background:#0e0e0e"></div>
<div class="a" style="left:54px;top:70px;width:12px;height:12px;background:#0e0e0e"></div>
<div class="a" style="left:70px;top:70px;width:12px;height:12px;background:#8f8f8f;border:1px solid #9a9a9a;border-radius:1.5px"></div>
<div class="a" style="left:86px;top:70px;width:12px;height:12px;background:#0e0e0e"></div>
<div class="a" style="left:6px;top:86px;width:12px;height:12px;background:#0e0e0e"></div>
<div class="a" style="left:22px;top:86px;width:12px;height:12px;background:#8f8f8f;border:1px solid #9a9a9a;border-radius:1.5px"></div>
<div class="a" style="left:38px;top:86px;width:12px;height:12px;background:#0e0e0e"></div>
<div class="a" style="left:54px;top:86px;width:12px;height:12px;background:#0e0e0e"></div>
<div class="a" style="left:70px;top:86px;width:12px;height:12px;background:#0e0e0e"></div>
<div class="a" style="left:86px;top:86px;width:12px;height:12px;background:#0e0e0e"></div>
</div>
<div class="t" style="left:0px;top:142.15px;font-size:14px;line-height:14px;color:#ffffff;font-weight:bold;width:178px;text-align:center;"><span style="letter-spacing:-1.1px">SECTEUR</span> 1</div>
</div>
<div class="a" style="left:869px;top:168px;width:180px;height:180px;border:1px solid #2a3346;background:#0a0f1c">
<div class="a" style="left:37px;top:20px;width:104px;height:104px;background:#000">
<div class="a" style="left:6px;top:6px;width:12px;height:12px;background:#0e0e0e"></div>
<div class="a" style="left:22px;top:6px;width:12px;height:12px;background:#0e0e0e"></div>
<div class="a" style="left:38px;top:6px;width:12px;height:12px;background:#0e0e0e"></div>
<div class="a" style="left:54px;top:6px;width:12px;height:12px;background:#0e0e0e"></div>
<div class="a" style="left:70px;top:6px;width:12px;height:12px;background:#0e0e0e"></div>
<div class="a" style="left:86px;top:6px;width:12px;height:12px;background:#0e0e0e"></div>
<div class="a" style="left:6px;top:22px;width:12px;height:12px;background:#0e0e0e"></div>
<div class="a" style="left:22px;top:22px;width:12px;height:12px;background:#0e0e0e"></div>
<div class="a" style="left:38px;top:22px;width:12px;height:12px;background:#0e0e0e"></div>
<div class="a" style="left:54px;top:22px;width:12px;height:12px;background:#0e0e0e"></div>
<div class="a" style="left:70px;top:22px;width:12px;height:12px;background:#0e0e0e"></div>
<div class="a" style="left:86px;top:22px;width:12px;height:12px;background:#0e0e0e"></div>
<div class="a" style="left:6px;top:38px;width:12px;height:12px;background:#8f8f8f;border:1px solid #9a9a9a;border-radius:1.5px"></div>
<div class="a" style="left:22px;top:38px;width:12px;height:12px;background:#0e0e0e"></div>
<div class="a" style="left:38px;top:38px;width:12px;height:12px;background:#0e0e0e"></div>
<div class="a" style="left:54px;top:38px;width:12px;height:12px;background:#0e0e0e"></div>
<div class="a" style="left:70px;top:38px;width:12px;height:12px;background:#0e0e0e"></div>
<div class="a" style="left:86px;top:38px;width:12px;height:12px;background:#0e0e0e"></div>
<div class="a" style="left:6px;top:54px;width:12px;height:12px;background:#0e0e0e"></div>
<div class="a" style="left:22px;top:54px;width:12px;height:12px;background:#0e0e0e"></div>
<div class="a" style="left:38px;top:54px;width:12px;height:12px;background:#0e0e0e"></div>
<div class="a" style="left:54px;top:54px;width:12px;height:12px;background:#0e0e0e"></div>
<div class="a" style="left:70px;top:54px;width:12px;height:12px;background:#0e0e0e"></div>
<div class="a" style="left:86px;top:54px;width:12px;height:12px;background:#0e0e0e"></div>
<div class="a" style="left:6px;top:70px;width:12px;height:12px;background:#0e0e0e"></div>
<div class="a" style="left:22px;top:70px;width:12px;height:12px;background:#0e0e0e"></div>
<div class="a" style="left:38px;top:70px;width:12px;height:12px;background:#0e0e0e"></div>
<div class="a" style="left:54px;top:70px;width:12px;height:12px;background:#0e0e0e"></div>
<div class="a" style="left:70px;top:70px;width:12px;height:12px;background:#0e0e0e"></div>
<div class="a" style="left:86px;top:70px;width:12px;height:12px;background:#0e0e0e"></div>
<div class="a" style="left:6px;top:86px;width:12px;height:12px;background:#0e0e0e"></div>
<div class="a" style="left:22px;top:86px;width:12px;height:12px;background:#0e0e0e"></div>
<div class="a" style="left:38px;top:86px;width:12px;height:12px;background:#0e0e0e"></div>
<div class="a" style="left:54px;top:86px;width:12px;height:12px;background:#0e0e0e"></div>
<div class="a" style="left:70px;top:86px;width:12px;height:12px;background:#0e0e0e"></div>
<div class="a" style="left:86px;top:86px;width:12px;height:12px;background:#0e0e0e"></div>
</div>
<div class="t" style="left:0px;top:142.15px;font-size:14px;line-height:14px;color:#ffffff;font-weight:bold;width:178px;text-align:center;"><span style="letter-spacing:-1.1px">SECTEUR</span> 2</div>
</div>
<div class="a" style="left:1064px;top:168px;width:180px;height:180px;border:1px solid #2a3346;background:#0a0f1c">
<div class="a" style="left:37px;top:20px;width:104px;height:104px;background:#000">
<div class="a" style="left:6px;top:6px;width:12px;height:12px;background:#0e0e0e"></div>
<div class="a" style="left:22px;top:6px;width:12px;height:12px;background:#0e0e0e"></div>
<div class="a" style="left:38px;top:6px;width:12px;height:12px;background:#0e0e0e"></div>
<div class="a" style="left:54px;top:6px;width:12px;height:12px;background:#0e0e0e"></div>
<div class="a" style="left:70px;top:6px;width:12px;height:12px;background:#0e0e0e"></div>
<div class="a" style="left:86px;top:6px;width:12px;height:12px;background:#0e0e0e"></div>
<div class="a" style="left:6px;top:22px;width:12px;height:12px;background:#0e0e0e"></div>
<div class="a" style="left:22px;top:22px;width:12px;height:12px;background:#0e0e0e"></div>
<div class="a" style="left:38px;top:22px;width:12px;height:12px;background:#0e0e0e"></div>
<div class="a" style="left:54px;top:22px;width:12px;height:12px;background:#0e0e0e"></div>
<div class="a" style="left:70px;top:22px;width:12px;height:12px;background:#0e0e0e"></div>
<div class="a" style="left:86px;top:22px;width:12px;height:12px;background:#0e0e0e"></div>
<div class="a" style="left:6px;top:38px;width:12px;height:12px;background:#0e0e0e"></div>
<div class="a" style="left:22px;top:38px;width:12px;height:12px;background:#0e0e0e"></div>
<div class="a" style="left:38px;top:38px;width:12px;height:12px;background:#0e0e0e"></div>
<div class="a" style="left:54px;top:38px;width:12px;height:12px;background:#0e0e0e"></div>
<div class="a" style="left:70px;top:38px;width:12px;height:12px;background:#0e0e0e"></div>
<div class="a" style="left:86px;top:38px;width:12px;height:12px;background:#0e0e0e"></div>
<div class="a" style="left:6px;top:54px;width:12px;height:12px;background:#0e0e0e"></div>
<div class="a" style="left:22px;top:54px;width:12px;height:12px;background:#0e0e0e"></div>
<div class="a" style="left:38px;top:54px;width:12px;height:12px;background:#0e0e0e"></div>
<div class="a" style="left:54px;top:54px;width:12px;height:12px;background:#0e0e0e"></div>
<div class="a" style="left:70px;top:54px;width:12px;height:12px;background:#0e0e0e"></div>
<div class="a" style="left:86px;top:54px;width:12px;height:12px;background:#0e0e0e"></div>
<div class="a" style="left:6px;top:70px;width:12px;height:12px;background:#0e0e0e"></div>
<div class="a" style="left:22px;top:70px;width:12px;height:12px;background:#0e0e0e"></div>
<div class="a" style="left:38px;top:70px;width:12px;height:12px;background:#0e0e0e"></div>
<div class="a" style="left:54px;top:70px;width:12px;height:12px;background:#0e0e0e"></div>
<div class="a" style="left:70px;top:70px;width:12px;height:12px;background:#0e0e0e"></div>
<div class="a" style="left:86px;top:70px;width:12px;height:12px;background:#0e0e0e"></div>
<div class="a" style="left:6px;top:86px;width:12px;height:12px;background:#0e0e0e"></div>
<div class="a" style="left:22px;top:86px;width:12px;height:12px;background:#0e0e0e"></div>
<div class="a" style="left:38px;top:86px;width:12px;height:12px;background:#0e0e0e"></div>
<div class="a" style="left:54px;top:86px;width:12px;height:12px;background:#0e0e0e"></div>
<div class="a" style="left:70px;top:86px;width:12px;height:12px;background:#0e0e0e"></div>
<div class="a" style="left:86px;top:86px;width:12px;height:12px;background:#0e0e0e"></div>
</div>
<div class="t" style="left:0px;top:142.15px;font-size:14px;line-height:14px;color:#ffffff;font-weight:bold;width:178px;text-align:center;"><span style="letter-spacing:-1.1px">SECTEUR</span> 3</div>
</div>
<div class="a" style="left:1259px;top:168px;width:180px;height:180px;border:1px solid #2a3346;background:#0a0f1c">
<div class="a" style="left:37px;top:20px;width:104px;height:104px;background:#000">
<div class="a" style="left:6px;top:6px;width:12px;height:12px;background:#0e0e0e"></div>
<div class="a" style="left:22px;top:6px;width:12px;height:12px;background:#0e0e0e"></div>
<div class="a" style="left:38px;top:6px;width:12px;height:12px;background:#0e0e0e"></div>
<div class="a" style="left:54px;top:6px;width:12px;height:12px;background:#0e0e0e"></div>
<div class="a" style="left:70px;top:6px;width:12px;height:12px;background:#0e0e0e"></div>
<div class="a" style="left:86px;top:6px;width:12px;height:12px;background:#0e0e0e"></div>
<div class="a" style="left:6px;top:22px;width:12px;height:12px;background:#0e0e0e"></div>
<div class="a" style="left:22px;top:22px;width:12px;height:12px;background:#0e0e0e"></div>
<div class="a" style="left:38px;top:22px;width:12px;height:12px;background:#0e0e0e"></div>
<div class="a" style="left:54px;top:22px;width:12px;height:12px;background:#0e0e0e"></div>
<div class="a" style="left:70px;top:22px;width:12px;height:12px;background:#0e0e0e"></div>
<div class="a" style="left:86px;top:22px;width:12px;height:12px;background:#0e0e0e"></div>
<div class="a" style="left:6px;top:38px;width:12px;height:12px;background:#0e0e0e"></div>
<div class="a" style="left:22px;top:38px;width:12px;height:12px;background:#0e0e0e"></div>
<div class="a" style="left:38px;top:38px;width:12px;height:12px;background:#0e0e0e"></div>
<div class="a" style="left:54px;top:38px;width:12px;height:12px;background:#0e0e0e"></div>
<div class="a" style="left:70px;top:38px;width:12px;height:12px;background:#0e0e0e"></div>
<div class="a" style="left:86px;top:38px;width:12px;height:12px;background:#0e0e0e"></div>
<div class="a" style="left:6px;top:54px;width:12px;height:12px;background:#0e0e0e"></div>
<div class="a" style="left:22px;top:54px;width:12px;height:12px;background:#0e0e0e"></div>
<div class="a" style="left:38px;top:54px;width:12px;height:12px;background:#0e0e0e"></div>
<div class="a" style="left:54px;top:54px;width:12px;height:12px;background:#0e0e0e"></div>
<div class="a" style="left:70px;top:54px;width:12px;height:12px;background:#0e0e0e"></div>
<div class="a" style="left:86px;top:54px;width:12px;height:12px;background:#0e0e0e"></div>
<div class="a" style="left:6px;top:70px;width:12px;height:12px;background:#0e0e0e"></div>
<div class="a" style="left:22px;top:70px;width:12px;height:12px;background:#0e0e0e"></div>
<div class="a" style="left:38px;top:70px;width:12px;height:12px;background:#0e0e0e"></div>
<div class="a" style="left:54px;top:70px;width:12px;height:12px;background:#0e0e0e"></div>
<div class="a" style="left:70px;top:70px;width:12px;height:12px;background:#0e0e0e"></div>
<div class="a" style="left:86px;top:70px;width:12px;height:12px;background:#0e0e0e"></div>
<div class="a" style="left:6px;top:86px;width:12px;height:12px;background:#0e0e0e"></div>
<div class="a" style="left:22px;top:86px;width:12px;height:12px;background:#0e0e0e"></div>
<div class="a" style="left:38px;top:86px;width:12px;height:12px;background:#0e0e0e"></div>
<div class="a" style="left:54px;top:86px;width:12px;height:12px;background:#0e0e0e"></div>
<div class="a" style="left:70px;top:86px;width:12px;height:12px;background:#0e0e0e"></div>
<div class="a" style="left:86px;top:86px;width:12px;height:12px;background:#0e0e0e"></div>
</div>
<div class="t" style="left:0px;top:142.15px;font-size:14px;line-height:14px;color:#ffffff;font-weight:bold;width:178px;text-align:center;"><span style="letter-spacing:-1.1px">SECTEUR</span> 4</div>
</div>
<div class="a" style="left:1454px;top:168px;width:180px;height:180px;border:1px solid #2a3346;background:#0a0f1c">
<div class="a" style="left:37px;top:20px;width:104px;height:104px;background:#000">
<div class="a" style="left:6px;top:6px;width:12px;height:12px;background:#0e0e0e"></div>
<div class="a" style="left:22px;top:6px;width:12px;height:12px;background:#0e0e0e"></div>
<div class="a" style="left:38px;top:6px;width:12px;height:12px;background:#0e0e0e"></div>
<div class="a" style="left:54px;top:6px;width:12px;height:12px;background:#0e0e0e"></div>
<div class="a" style="left:70px;top:6px;width:12px;height:12px;background:#0e0e0e"></div>
<div class="a" style="left:86px;top:6px;width:12px;height:12px;background:#0e0e0e"></div>
<div class="a" style="left:6px;top:22px;width:12px;height:12px;background:#0e0e0e"></div>
<div class="a" style="left:22px;top:22px;width:12px;height:12px;background:#0e0e0e"></div>
<div class="a" style="left:38px;top:22px;width:12px;height:12px;background:#0e0e0e"></div>
<div class="a" style="left:54px;top:22px;width:12px;height:12px;background:#0e0e0e"></div>
<div class="a" style="left:70px;top:22px;width:12px;height:12px;background:#0e0e0e"></div>
<div class="a" style="left:86px;top:22px;width:12px;height:12px;background:#0e0e0e"></div>
<div class="a" style="left:6px;top:38px;width:12px;height:12px;background:#0e0e0e"></div>
<div class="a" style="left:22px;top:38px;width:12px;height:12px;background:#0e0e0e"></div>
<div class="a" style="left:38px;top:38px;width:12px;height:12px;background:#0e0e0e"></div>
<div class="a" style="left:54px;top:38px;width:12px;height:12px;background:#0e0e0e"></div>
<div class="a" style="left:70px;top:38px;width:12px;height:12px;background:#0e0e0e"></div>
<div class="a" style="left:86px;top:38px;width:12px;height:12px;background:#0e0e0e"></div>
<div class="a" style="left:6px;top:54px;width:12px;height:12px;background:#0e0e0e"></div>
<div class="a" style="left:22px;top:54px;width:12px;height:12px;background:#0e0e0e"></div>
<div class="a" style="left:38px;top:54px;width:12px;height:12px;background:#0e0e0e"></div>
<div class="a" style="left:54px;top:54px;width:12px;height:12px;background:#0e0e0e"></div>
<div class="a" style="left:70px;top:54px;width:12px;height:12px;background:#0e0e0e"></div>
<div class="a" style="left:86px;top:54px;width:12px;height:12px;background:#0e0e0e"></div>
<div class="a" style="left:6px;top:70px;width:12px;height:12px;background:#0e0e0e"></div>
<div class="a" style="left:22px;top:70px;width:12px;height:12px;background:#0e0e0e"></div>
<div class="a" style="left:38px;top:70px;width:12px;height:12px;background:#0e0e0e"></div>
<div class="a" style="left:54px;top:70px;width:12px;height:12px;background:#0e0e0e"></div>
<div class="a" style="left:70px;top:70px;width:12px;height:12px;background:#0e0e0e"></div>
<div class="a" style="left:86px;top:70px;width:12px;height:12px;background:#0e0e0e"></div>
<div class="a" style="left:6px;top:86px;width:12px;height:12px;background:#0e0e0e"></div>
<div class="a" style="left:22px;top:86px;width:12px;height:12px;background:#0e0e0e"></div>
<div class="a" style="left:38px;top:86px;width:12px;height:12px;background:#0e0e0e"></div>
<div class="a" style="left:54px;top:86px;width:12px;height:12px;background:#0e0e0e"></div>
<div class="a" style="left:70px;top:86px;width:12px;height:12px;background:#0e0e0e"></div>
<div class="a" style="left:86px;top:86px;width:12px;height:12px;background:#0e0e0e"></div>
</div>
<div class="t" style="left:0px;top:142.15px;font-size:14px;line-height:14px;color:#ffffff;font-weight:bold;width:178px;text-align:center;"><span style="letter-spacing:-1.1px">SECTEUR</span> 5</div>
</div>
<div class="a" style="left:1649px;top:168px;width:180px;height:180px;border:1px solid #2a3346;background:#0a0f1c">
<div class="a" style="left:37px;top:20px;width:104px;height:104px;background:#000">
<div class="a" style="left:6px;top:6px;width:12px;height:12px;background:#0e0e0e"></div>
<div class="a" style="left:22px;top:6px;width:12px;height:12px;background:#0e0e0e"></div>
<div class="a" style="left:38px;top:6px;width:12px;height:12px;background:#0e0e0e"></div>
<div class="a" style="left:54px;top:6px;width:12px;height:12px;background:#0e0e0e"></div>
<div class="a" style="left:70px;top:6px;width:12px;height:12px;background:#0e0e0e"></div>
<div class="a" style="left:86px;top:6px;width:12px;height:12px;background:#0e0e0e"></div>
<div class="a" style="left:6px;top:22px;width:12px;height:12px;background:#0e0e0e"></div>
<div class="a" style="left:22px;top:22px;width:12px;height:12px;background:#0e0e0e"></div>
<div class="a" style="left:38px;top:22px;width:12px;height:12px;background:#0e0e0e"></div>
<div class="a" style="left:54px;top:22px;width:12px;height:12px;background:#0e0e0e"></div>
<div class="a" style="left:70px;top:22px;width:12px;height:12px;background:#0e0e0e"></div>
<div class="a" style="left:86px;top:22px;width:12px;height:12px;background:#0e0e0e"></div>
<div class="a" style="left:6px;top:38px;width:12px;height:12px;background:#0e0e0e"></div>
<div class="a" style="left:22px;top:38px;width:12px;height:12px;background:#0e0e0e"></div>
<div class="a" style="left:38px;top:38px;width:12px;height:12px;background:#0e0e0e"></div>
<div class="a" style="left:54px;top:38px;width:12px;height:12px;background:#0e0e0e"></div>
<div class="a" style="left:70px;top:38px;width:12px;height:12px;background:#0e0e0e"></div>
<div class="a" style="left:86px;top:38px;width:12px;height:12px;background:#0e0e0e"></div>
<div class="a" style="left:6px;top:54px;width:12px;height:12px;background:#0e0e0e"></div>
<div class="a" style="left:22px;top:54px;width:12px;height:12px;background:#0e0e0e"></div>
<div class="a" style="left:38px;top:54px;width:12px;height:12px;background:#0e0e0e"></div>
<div class="a" style="left:54px;top:54px;width:12px;height:12px;background:#0e0e0e"></div>
<div class="a" style="left:70px;top:54px;width:12px;height:12px;background:#0e0e0e"></div>
<div class="a" style="left:86px;top:54px;width:12px;height:12px;background:#0e0e0e"></div>
<div class="a" style="left:6px;top:70px;width:12px;height:12px;background:#0e0e0e"></div>
<div class="a" style="left:22px;top:70px;width:12px;height:12px;background:#0e0e0e"></div>
<div class="a" style="left:38px;top:70px;width:12px;height:12px;background:#0e0e0e"></div>
<div class="a" style="left:54px;top:70px;width:12px;height:12px;background:#0e0e0e"></div>
<div class="a" style="left:70px;top:70px;width:12px;height:12px;background:#0e0e0e"></div>
<div class="a" style="left:86px;top:70px;width:12px;height:12px;background:#0e0e0e"></div>
<div class="a" style="left:6px;top:86px;width:12px;height:12px;background:#0e0e0e"></div>
<div class="a" style="left:22px;top:86px;width:12px;height:12px;background:#0e0e0e"></div>
<div class="a" style="left:38px;top:86px;width:12px;height:12px;background:#0e0e0e"></div>
<div class="a" style="left:54px;top:86px;width:12px;height:12px;background:#0e0e0e"></div>
<div class="a" style="left:70px;top:86px;width:12px;height:12px;background:#0e0e0e"></div>
<div class="a" style="left:86px;top:86px;width:12px;height:12px;background:#0e0e0e"></div>
</div>
<div class="t" style="left:0px;top:142.15px;font-size:14px;line-height:14px;color:#ffffff;font-weight:bold;width:178px;text-align:center;"><span style="letter-spacing:-1.1px">SECTEUR</span> 6</div>
</div>
<div class="a" style="left:674px;top:363px;width:180px;height:180px;border:1px solid #2a3346;background:#0a0f1c">
<div class="a" style="left:37px;top:20px;width:104px;height:104px;background:#000">
<div class="a" style="left:6px;top:6px;width:12px;height:12px;background:#0e0e0e"></div>
<div class="a" style="left:22px;top:6px;width:12px;height:12px;background:#0e0e0e"></div>
<div class="a" style="left:38px;top:6px;width:12px;height:12px;background:#0e0e0e"></div>
<div class="a" style="left:54px;top:6px;width:12px;height:12px;background:#0e0e0e"></div>
<div class="a" style="left:70px;top:6px;width:12px;height:12px;background:#0e0e0e"></div>
<div class="a" style="left:86px;top:6px;width:12px;height:12px;background:#0e0e0e"></div>
<div class="a" style="left:6px;top:22px;width:12px;height:12px;background:#0e0e0e"></div>
<div class="a" style="left:22px;top:22px;width:12px;height:12px;background:#0e0e0e"></div>
<div class="a" style="left:38px;top:22px;width:12px;height:12px;background:#0e0e0e"></div>
<div class="a" style="left:54px;top:22px;width:12px;height:12px;background:#0e0e0e"></div>
<div class="a" style="left:70px;top:22px;width:12px;height:12px;background:#0e0e0e"></div>
<div class="a" style="left:86px;top:22px;width:12px;height:12px;background:#0e0e0e"></div>
<div class="a" style="left:6px;top:38px;width:12px;height:12px;background:#0e0e0e"></div>
<div class="a" style="left:22px;top:38px;width:12px;height:12px;background:#0e0e0e"></div>
<div class="a" style="left:38px;top:38px;width:12px;height:12px;background:#0e0e0e"></div>
<div class="a" style="left:54px;top:38px;width:12px;height:12px;background:#0e0e0e"></div>
<div class="a" style="left:70px;top:38px;width:12px;height:12px;background:#0e0e0e"></div>
<div class="a" style="left:86px;top:38px;width:12px;height:12px;background:#0e0e0e"></div>
<div class="a" style="left:6px;top:54px;width:12px;height:12px;background:#0e0e0e"></div>
<div class="a" style="left:22px;top:54px;width:12px;height:12px;background:#0e0e0e"></div>
<div class="a" style="left:38px;top:54px;width:12px;height:12px;background:#0e0e0e"></div>
<div class="a" style="left:54px;top:54px;width:12px;height:12px;background:#0e0e0e"></div>
<div class="a" style="left:70px;top:54px;width:12px;height:12px;background:#0e0e0e"></div>
<div class="a" style="left:86px;top:54px;width:12px;height:12px;background:#0e0e0e"></div>
<div class="a" style="left:6px;top:70px;width:12px;height:12px;background:#0e0e0e"></div>
<div class="a" style="left:22px;top:70px;width:12px;height:12px;background:#0e0e0e"></div>
<div class="a" style="left:38px;top:70px;width:12px;height:12px;background:#0e0e0e"></div>
<div class="a" style="left:54px;top:70px;width:12px;height:12px;background:#0e0e0e"></div>
<div class="a" style="left:70px;top:70px;width:12px;height:12px;background:#0e0e0e"></div>
<div class="a" style="left:86px;top:70px;width:12px;height:12px;background:#0e0e0e"></div>
<div class="a" style="left:6px;top:86px;width:12px;height:12px;background:#0e0e0e"></div>
<div class="a" style="left:22px;top:86px;width:12px;height:12px;background:#0e0e0e"></div>
<div class="a" style="left:38px;top:86px;width:12px;height:12px;background:#0e0e0e"></div>
<div class="a" style="left:54px;top:86px;width:12px;height:12px;background:#0e0e0e"></div>
<div class="a" style="left:70px;top:86px;width:12px;height:12px;background:#0e0e0e"></div>
<div class="a" style="left:86px;top:86px;width:12px;height:12px;background:#0e0e0e"></div>
</div>
<div class="t" style="left:0px;top:142.15px;font-size:14px;line-height:14px;color:#ffffff;font-weight:bold;width:178px;text-align:center;"><span style="letter-spacing:-1.1px">SECTEUR</span> 7</div>
</div>
<div class="a" style="left:869px;top:363px;width:180px;height:180px;border:1px solid #2a3346;background:#0a0f1c">
<div class="a" style="left:37px;top:20px;width:104px;height:104px;background:#000">
<div class="a" style="left:6px;top:6px;width:12px;height:12px;background:#0e0e0e"></div>
<div class="a" style="left:22px;top:6px;width:12px;height:12px;background:#0e0e0e"></div>
<div class="a" style="left:38px;top:6px;width:12px;height:12px;background:#0e0e0e"></div>
<div class="a" style="left:54px;top:6px;width:12px;height:12px;background:#0e0e0e"></div>
<div class="a" style="left:70px;top:6px;width:12px;height:12px;background:#0e0e0e"></div>
<div class="a" style="left:86px;top:6px;width:12px;height:12px;background:#0e0e0e"></div>
<div class="a" style="left:6px;top:22px;width:12px;height:12px;background:#0e0e0e"></div>
<div class="a" style="left:22px;top:22px;width:12px;height:12px;background:#0e0e0e"></div>
<div class="a" style="left:38px;top:22px;width:12px;height:12px;background:#0e0e0e"></div>
<div class="a" style="left:54px;top:22px;width:12px;height:12px;background:#0e0e0e"></div>
<div class="a" style="left:70px;top:22px;width:12px;height:12px;background:#0e0e0e"></div>
<div class="a" style="left:86px;top:22px;width:12px;height:12px;background:#0e0e0e"></div>
<div class="a" style="left:6px;top:38px;width:12px;height:12px;background:#0e0e0e"></div>
<div class="a" style="left:22px;top:38px;width:12px;height:12px;background:#0e0e0e"></div>
<div class="a" style="left:38px;top:38px;width:12px;height:12px;background:#0e0e0e"></div>
<div class="a" style="left:54px;top:38px;width:12px;height:12px;background:#0e0e0e"></div>
<div class="a" style="left:70px;top:38px;width:12px;height:12px;background:#0e0e0e"></div>
<div class="a" style="left:86px;top:38px;width:12px;height:12px;background:#0e0e0e"></div>
<div class="a" style="left:6px;top:54px;width:12px;height:12px;background:#0e0e0e"></div>
<div class="a" style="left:22px;top:54px;width:12px;height:12px;background:#0e0e0e"></div>
<div class="a" style="left:38px;top:54px;width:12px;height:12px;background:#0e0e0e"></div>
<div class="a" style="left:54px;top:54px;width:12px;height:12px;background:#0e0e0e"></div>
<div class="a" style="left:70px;top:54px;width:12px;height:12px;background:#0e0e0e"></div>
<div class="a" style="left:86px;top:54px;width:12px;height:12px;background:#0e0e0e"></div>
<div class="a" style="left:6px;top:70px;width:12px;height:12px;background:#0e0e0e"></div>
<div class="a" style="left:22px;top:70px;width:12px;height:12px;background:#0e0e0e"></div>
<div class="a" style="left:38px;top:70px;width:12px;height:12px;background:#0e0e0e"></div>
<div class="a" style="left:54px;top:70px;width:12px;height:12px;background:#0e0e0e"></div>
<div class="a" style="left:70px;top:70px;width:12px;height:12px;background:#0e0e0e"></div>
<div class="a" style="left:86px;top:70px;width:12px;height:12px;background:#0e0e0e"></div>
<div class="a" style="left:6px;top:86px;width:12px;height:12px;background:#0e0e0e"></div>
<div class="a" style="left:22px;top:86px;width:12px;height:12px;background:#0e0e0e"></div>
<div class="a" style="left:38px;top:86px;width:12px;height:12px;background:#0e0e0e"></div>
<div class="a" style="left:54px;top:86px;width:12px;height:12px;background:#0e0e0e"></div>
<div class="a" style="left:70px;top:86px;width:12px;height:12px;background:#0e0e0e"></div>
<div class="a" style="left:86px;top:86px;width:12px;height:12px;background:#0e0e0e"></div>
</div>
<div class="t" style="left:0px;top:142.15px;font-size:14px;line-height:14px;color:#ffffff;font-weight:bold;width:178px;text-align:center;"><span style="letter-spacing:-1.1px">SECTEUR</span> 8</div>
</div>
<div class="a" style="left:1064px;top:363px;width:180px;height:180px;border:1px solid #2a3346;background:#0a0f1c">
<div class="a" style="left:37px;top:20px;width:104px;height:104px;background:#000">
<div class="a" style="left:6px;top:6px;width:12px;height:12px;background:#0e0e0e"></div>
<div class="a" style="left:22px;top:6px;width:12px;height:12px;background:#0e0e0e"></div>
<div class="a" style="left:38px;top:6px;width:12px;height:12px;background:#0e0e0e"></div>
<div class="a" style="left:54px;top:6px;width:12px;height:12px;background:#0e0e0e"></div>
<div class="a" style="left:70px;top:6px;width:12px;height:12px;background:#0e0e0e"></div>
<div class="a" style="left:86px;top:6px;width:12px;height:12px;background:#0e0e0e"></div>
<div class="a" style="left:6px;top:22px;width:12px;height:12px;background:#0e0e0e"></div>
<div class="a" style="left:22px;top:22px;width:12px;height:12px;background:#0e0e0e"></div>
<div class="a" style="left:38px;top:22px;width:12px;height:12px;background:#0e0e0e"></div>
<div class="a" style="left:54px;top:22px;width:12px;height:12px;background:#0e0e0e"></div>
<div class="a" style="left:70px;top:22px;width:12px;height:12px;background:#0e0e0e"></div>
<div class="a" style="left:86px;top:22px;width:12px;height:12px;background:#0e0e0e"></div>
<div class="a" style="left:6px;top:38px;width:12px;height:12px;background:#0e0e0e"></div>
<div class="a" style="left:22px;top:38px;width:12px;height:12px;background:#0e0e0e"></div>
<div class="a" style="left:38px;top:38px;width:12px;height:12px;background:#0e0e0e"></div>
<div class="a" style="left:54px;top:38px;width:12px;height:12px;background:#0e0e0e"></div>
<div class="a" style="left:70px;top:38px;width:12px;height:12px;background:#0e0e0e"></div>
<div class="a" style="left:86px;top:38px;width:12px;height:12px;background:#0e0e0e"></div>
<div class="a" style="left:6px;top:54px;width:12px;height:12px;background:#0e0e0e"></div>
<div class="a" style="left:22px;top:54px;width:12px;height:12px;background:#0e0e0e"></div>
<div class="a" style="left:38px;top:54px;width:12px;height:12px;background:#0e0e0e"></div>
<div class="a" style="left:54px;top:54px;width:12px;height:12px;background:#0e0e0e"></div>
<div class="a" style="left:70px;top:54px;width:12px;height:12px;background:#0e0e0e"></div>
<div class="a" style="left:86px;top:54px;width:12px;height:12px;background:#0e0e0e"></div>
<div class="a" style="left:6px;top:70px;width:12px;height:12px;background:#0e0e0e"></div>
<div class="a" style="left:22px;top:70px;width:12px;height:12px;background:#0e0e0e"></div>
<div class="a" style="left:38px;top:70px;width:12px;height:12px;background:#0e0e0e"></div>
<div class="a" style="left:54px;top:70px;width:12px;height:12px;background:#0e0e0e"></div>
<div class="a" style="left:70px;top:70px;width:12px;height:12px;background:#0e0e0e"></div>
<div class="a" style="left:86px;top:70px;width:12px;height:12px;background:#0e0e0e"></div>
<div class="a" style="left:6px;top:86px;width:12px;height:12px;background:#0e0e0e"></div>
<div class="a" style="left:22px;top:86px;width:12px;height:12px;background:#0e0e0e"></div>
<div class="a" style="left:38px;top:86px;width:12px;height:12px;background:#0e0e0e"></div>
<div class="a" style="left:54px;top:86px;width:12px;height:12px;background:#0e0e0e"></div>
<div class="a" style="left:70px;top:86px;width:12px;height:12px;background:#0e0e0e"></div>
<div class="a" style="left:86px;top:86px;width:12px;height:12px;background:#0e0e0e"></div>
</div>
<div class="t" style="left:0px;top:142.15px;font-size:14px;line-height:14px;color:#ffffff;font-weight:bold;width:178px;text-align:center;"><span style="letter-spacing:-1.1px">SECTEUR</span> 9</div>
</div>
<div class="a" style="left:1259px;top:363px;width:180px;height:180px;border:1px solid #2a3346;background:#0a0f1c">
<div class="a" style="left:37px;top:20px;width:104px;height:104px;background:#000">
<div class="a" style="left:6px;top:6px;width:12px;height:12px;background:#0e0e0e"></div>
<div class="a" style="left:22px;top:6px;width:12px;height:12px;background:#0e0e0e"></div>
<div class="a" style="left:38px;top:6px;width:12px;height:12px;background:#0e0e0e"></div>
<div class="a" style="left:54px;top:6px;width:12px;height:12px;background:#0e0e0e"></div>
<div class="a" style="left:70px;top:6px;width:12px;height:12px;background:#0e0e0e"></div>
<div class="a" style="left:86px;top:6px;width:12px;height:12px;background:#0e0e0e"></div>
<div class="a" style="left:6px;top:22px;width:12px;height:12px;background:#0e0e0e"></div>
<div class="a" style="left:22px;top:22px;width:12px;height:12px;background:#0e0e0e"></div>
<div class="a" style="left:38px;top:22px;width:12px;height:12px;background:#0e0e0e"></div>
<div class="a" style="left:54px;top:22px;width:12px;height:12px;background:#0e0e0e"></div>
<div class="a" style="left:70px;top:22px;width:12px;height:12px;background:#0e0e0e"></div>
<div class="a" style="left:86px;top:22px;width:12px;height:12px;background:#0e0e0e"></div>
<div class="a" style="left:6px;top:38px;width:12px;height:12px;background:#0e0e0e"></div>
<div class="a" style="left:22px;top:38px;width:12px;height:12px;background:#0e0e0e"></div>
<div class="a" style="left:38px;top:38px;width:12px;height:12px;background:#0e0e0e"></div>
<div class="a" style="left:54px;top:38px;width:12px;height:12px;background:#0e0e0e"></div>
<div class="a" style="left:70px;top:38px;width:12px;height:12px;background:#0e0e0e"></div>
<div class="a" style="left:86px;top:38px;width:12px;height:12px;background:#0e0e0e"></div>
<div class="a" style="left:6px;top:54px;width:12px;height:12px;background:#0e0e0e"></div>
<div class="a" style="left:22px;top:54px;width:12px;height:12px;background:#0e0e0e"></div>
<div class="a" style="left:38px;top:54px;width:12px;height:12px;background:#0e0e0e"></div>
<div class="a" style="left:54px;top:54px;width:12px;height:12px;background:#0e0e0e"></div>
<div class="a" style="left:70px;top:54px;width:12px;height:12px;background:#0e0e0e"></div>
<div class="a" style="left:86px;top:54px;width:12px;height:12px;background:#0e0e0e"></div>
<div class="a" style="left:6px;top:70px;width:12px;height:12px;background:#0e0e0e"></div>
<div class="a" style="left:22px;top:70px;width:12px;height:12px;background:#0e0e0e"></div>
<div class="a" style="left:38px;top:70px;width:12px;height:12px;background:#0e0e0e"></div>
<div class="a" style="left:54px;top:70px;width:12px;height:12px;background:#0e0e0e"></div>
<div class="a" style="left:70px;top:70px;width:12px;height:12px;background:#0e0e0e"></div>
<div class="a" style="left:86px;top:70px;width:12px;height:12px;background:#0e0e0e"></div>
<div class="a" style="left:6px;top:86px;width:12px;height:12px;background:#0e0e0e"></div>
<div class="a" style="left:22px;top:86px;width:12px;height:12px;background:#0e0e0e"></div>
<div class="a" style="left:38px;top:86px;width:12px;height:12px;background:#0e0e0e"></div>
<div class="a" style="left:54px;top:86px;width:12px;height:12px;background:#0e0e0e"></div>
<div class="a" style="left:70px;top:86px;width:12px;height:12px;background:#0e0e0e"></div>
<div class="a" style="left:86px;top:86px;width:12px;height:12px;background:#0e0e0e"></div>
</div>
<div class="t" style="left:0px;top:142.15px;font-size:14px;line-height:14px;color:#ffffff;font-weight:bold;width:178px;text-align:center;"><span style="letter-spacing:-1.1px">SECTEUR</span> 10</div>
</div>
<div class="a" style="left:1454px;top:363px;width:180px;height:180px;border:1px solid #2a3346;background:#0a0f1c">
<div class="a" style="left:37px;top:20px;width:104px;height:104px;background:#000">
<div class="a" style="left:6px;top:6px;width:12px;height:12px;background:#0e0e0e"></div>
<div class="a" style="left:22px;top:6px;width:12px;height:12px;background:#0e0e0e"></div>
<div class="a" style="left:38px;top:6px;width:12px;height:12px;background:#0e0e0e"></div>
<div class="a" style="left:54px;top:6px;width:12px;height:12px;background:#0e0e0e"></div>
<div class="a" style="left:70px;top:6px;width:12px;height:12px;background:#0e0e0e"></div>
<div class="a" style="left:86px;top:6px;width:12px;height:12px;background:#0e0e0e"></div>
<div class="a" style="left:6px;top:22px;width:12px;height:12px;background:#0e0e0e"></div>
<div class="a" style="left:22px;top:22px;width:12px;height:12px;background:#0e0e0e"></div>
<div class="a" style="left:38px;top:22px;width:12px;height:12px;background:#0e0e0e"></div>
<div class="a" style="left:54px;top:22px;width:12px;height:12px;background:#0e0e0e"></div>
<div class="a" style="left:70px;top:22px;width:12px;height:12px;background:#0e0e0e"></div>
<div class="a" style="left:86px;top:22px;width:12px;height:12px;background:#0e0e0e"></div>
<div class="a" style="left:6px;top:38px;width:12px;height:12px;background:#0e0e0e"></div>
<div class="a" style="left:22px;top:38px;width:12px;height:12px;background:#0e0e0e"></div>
<div class="a" style="left:38px;top:38px;width:12px;height:12px;background:#0e0e0e"></div>
<div class="a" style="left:54px;top:38px;width:12px;height:12px;background:#0e0e0e"></div>
<div class="a" style="left:70px;top:38px;width:12px;height:12px;background:#0e0e0e"></div>
<div class="a" style="left:86px;top:38px;width:12px;height:12px;background:#0e0e0e"></div>
<div class="a" style="left:6px;top:54px;width:12px;height:12px;background:#0e0e0e"></div>
<div class="a" style="left:22px;top:54px;width:12px;height:12px;background:#0e0e0e"></div>
<div class="a" style="left:38px;top:54px;width:12px;height:12px;background:#0e0e0e"></div>
<div class="a" style="left:54px;top:54px;width:12px;height:12px;background:#0e0e0e"></div>
<div class="a" style="left:70px;top:54px;width:12px;height:12px;background:#0e0e0e"></div>
<div class="a" style="left:86px;top:54px;width:12px;height:12px;background:#0e0e0e"></div>
<div class="a" style="left:6px;top:70px;width:12px;height:12px;background:#0e0e0e"></div>
<div class="a" style="left:22px;top:70px;width:12px;height:12px;background:#0e0e0e"></div>
<div class="a" style="left:38px;top:70px;width:12px;height:12px;background:#0e0e0e"></div>
<div class="a" style="left:54px;top:70px;width:12px;height:12px;background:#0e0e0e"></div>
<div class="a" style="left:70px;top:70px;width:12px;height:12px;background:#0e0e0e"></div>
<div class="a" style="left:86px;top:70px;width:12px;height:12px;background:#0e0e0e"></div>
<div class="a" style="left:6px;top:86px;width:12px;height:12px;background:#0e0e0e"></div>
<div class="a" style="left:22px;top:86px;width:12px;height:12px;background:#0e0e0e"></div>
<div class="a" style="left:38px;top:86px;width:12px;height:12px;background:#0e0e0e"></div>
<div class="a" style="left:54px;top:86px;width:12px;height:12px;background:#0e0e0e"></div>
<div class="a" style="left:70px;top:86px;width:12px;height:12px;background:#0e0e0e"></div>
<div class="a" style="left:86px;top:86px;width:12px;height:12px;background:#0e0e0e"></div>
</div>
<div class="t" style="left:0px;top:142.15px;font-size:14px;line-height:14px;color:#ffffff;font-weight:bold;width:178px;text-align:center;"><span style="letter-spacing:-1.1px">SECTEUR</span> 11</div>
</div>
<div class="a" style="left:1649px;top:363px;width:180px;height:180px;border:1px solid #2a3346;background:#0a0f1c">
<div class="a" style="left:37px;top:20px;width:104px;height:104px;background:#000">
<div class="a" style="left:6px;top:6px;width:12px;height:12px;background:#0e0e0e"></div>
<div class="a" style="left:22px;top:6px;width:12px;height:12px;background:#0e0e0e"></div>
<div class="a" style="left:38px;top:6px;width:12px;height:12px;background:#0e0e0e"></div>
<div class="a" style="left:54px;top:6px;width:12px;height:12px;background:#0e0e0e"></div>
<div class="a" style="left:70px;top:6px;width:12px;height:12px;background:#0e0e0e"></div>
<div class="a" style="left:86px;top:6px;width:12px;height:12px;background:#0e0e0e"></div>
<div class="a" style="left:6px;top:22px;width:12px;height:12px;background:#0e0e0e"></div>
<div class="a" style="left:22px;top:22px;width:12px;height:12px;background:#0e0e0e"></div>
<div class="a" style="left:38px;top:22px;width:12px;height:12px;background:#0e0e0e"></div>
<div class="a" style="left:54px;top:22px;width:12px;height:12px;background:#0e0e0e"></div>
<div class="a" style="left:70px;top:22px;width:12px;height:12px;background:#0e0e0e"></div>
<div class="a" style="left:86px;top:22px;width:12px;height:12px;background:#0e0e0e"></div>
<div class="a" style="left:6px;top:38px;width:12px;height:12px;background:#0e0e0e"></div>
<div class="a" style="left:22px;top:38px;width:12px;height:12px;background:#0e0e0e"></div>
<div class="a" style="left:38px;top:38px;width:12px;height:12px;background:#0e0e0e"></div>
<div class="a" style="left:54px;top:38px;width:12px;height:12px;background:#0e0e0e"></div>
<div class="a" style="left:70px;top:38px;width:12px;height:12px;background:#0e0e0e"></div>
<div class="a" style="left:86px;top:38px;width:12px;height:12px;background:#0e0e0e"></div>
<div class="a" style="left:6px;top:54px;width:12px;height:12px;background:#0e0e0e"></div>
<div class="a" style="left:22px;top:54px;width:12px;height:12px;background:#0e0e0e"></div>
<div class="a" style="left:38px;top:54px;width:12px;height:12px;background:#0e0e0e"></div>
<div class="a" style="left:54px;top:54px;width:12px;height:12px;background:#0e0e0e"></div>
<div class="a" style="left:70px;top:54px;width:12px;height:12px;background:#0e0e0e"></div>
<div class="a" style="left:86px;top:54px;width:12px;height:12px;background:#0e0e0e"></div>
<div class="a" style="left:6px;top:70px;width:12px;height:12px;background:#0e0e0e"></div>
<div class="a" style="left:22px;top:70px;width:12px;height:12px;background:#0e0e0e"></div>
<div class="a" style="left:38px;top:70px;width:12px;height:12px;background:#0e0e0e"></div>
<div class="a" style="left:54px;top:70px;width:12px;height:12px;background:#0e0e0e"></div>
<div class="a" style="left:70px;top:70px;width:12px;height:12px;background:#0e0e0e"></div>
<div class="a" style="left:86px;top:70px;width:12px;height:12px;background:#0e0e0e"></div>
<div class="a" style="left:6px;top:86px;width:12px;height:12px;background:#0e0e0e"></div>
<div class="a" style="left:22px;top:86px;width:12px;height:12px;background:#0e0e0e"></div>
<div class="a" style="left:38px;top:86px;width:12px;height:12px;background:#0e0e0e"></div>
<div class="a" style="left:54px;top:86px;width:12px;height:12px;background:#0e0e0e"></div>
<div class="a" style="left:70px;top:86px;width:12px;height:12px;background:#0e0e0e"></div>
<div class="a" style="left:86px;top:86px;width:12px;height:12px;background:#0e0e0e"></div>
</div>
<div class="t" style="left:0px;top:142.15px;font-size:14px;line-height:14px;color:#ffffff;font-weight:bold;width:178px;text-align:center;"><span style="letter-spacing:-1.1px">SECTEUR</span> 12</div>
</div>
<div class="a" style="left:674px;top:558px;width:180px;height:180px;border:1px solid #2a3346;background:#0a0f1c">
<div class="a" style="left:37px;top:20px;width:104px;height:104px;background:#000">
<div class="a" style="left:6px;top:6px;width:12px;height:12px;background:#0e0e0e"></div>
<div class="a" style="left:22px;top:6px;width:12px;height:12px;background:#0e0e0e"></div>
<div class="a" style="left:38px;top:6px;width:12px;height:12px;background:#0e0e0e"></div>
<div class="a" style="left:54px;top:6px;width:12px;height:12px;background:#0e0e0e"></div>
<div class="a" style="left:70px;top:6px;width:12px;height:12px;background:#0e0e0e"></div>
<div class="a" style="left:86px;top:6px;width:12px;height:12px;background:#0e0e0e"></div>
<div class="a" style="left:6px;top:22px;width:12px;height:12px;background:#0e0e0e"></div>
<div class="a" style="left:22px;top:22px;width:12px;height:12px;background:#0e0e0e"></div>
<div class="a" style="left:38px;top:22px;width:12px;height:12px;background:#0e0e0e"></div>
<div class="a" style="left:54px;top:22px;width:12px;height:12px;background:#0e0e0e"></div>
<div class="a" style="left:70px;top:22px;width:12px;height:12px;background:#0e0e0e"></div>
<div class="a" style="left:86px;top:22px;width:12px;height:12px;background:#0e0e0e"></div>
<div class="a" style="left:6px;top:38px;width:12px;height:12px;background:#0e0e0e"></div>
<div class="a" style="left:22px;top:38px;width:12px;height:12px;background:#0e0e0e"></div>
<div class="a" style="left:38px;top:38px;width:12px;height:12px;background:#0e0e0e"></div>
<div class="a" style="left:54px;top:38px;width:12px;height:12px;background:#0e0e0e"></div>
<div class="a" style="left:70px;top:38px;width:12px;height:12px;background:#0e0e0e"></div>
<div class="a" style="left:86px;top:38px;width:12px;height:12px;background:#0e0e0e"></div>
<div class="a" style="left:6px;top:54px;width:12px;height:12px;background:#0e0e0e"></div>
<div class="a" style="left:22px;top:54px;width:12px;height:12px;background:#0e0e0e"></div>
<div class="a" style="left:38px;top:54px;width:12px;height:12px;background:#0e0e0e"></div>
<div class="a" style="left:54px;top:54px;width:12px;height:12px;background:#0e0e0e"></div>
<div class="a" style="left:70px;top:54px;width:12px;height:12px;background:#0e0e0e"></div>
<div class="a" style="left:86px;top:54px;width:12px;height:12px;background:#0e0e0e"></div>
<div class="a" style="left:6px;top:70px;width:12px;height:12px;background:#0e0e0e"></div>
<div class="a" style="left:22px;top:70px;width:12px;height:12px;background:#0e0e0e"></div>
<div class="a" style="left:38px;top:70px;width:12px;height:12px;background:#0e0e0e"></div>
<div class="a" style="left:54px;top:70px;width:12px;height:12px;background:#0e0e0e"></div>
<div class="a" style="left:70px;top:70px;width:12px;height:12px;background:#0e0e0e"></div>
<div class="a" style="left:86px;top:70px;width:12px;height:12px;background:#0e0e0e"></div>
<div class="a" style="left:6px;top:86px;width:12px;height:12px;background:#0e0e0e"></div>
<div class="a" style="left:22px;top:86px;width:12px;height:12px;background:#0e0e0e"></div>
<div class="a" style="left:38px;top:86px;width:12px;height:12px;background:#0e0e0e"></div>
<div class="a" style="left:54px;top:86px;width:12px;height:12px;background:#0e0e0e"></div>
<div class="a" style="left:70px;top:86px;width:12px;height:12px;background:#0e0e0e"></div>
<div class="a" style="left:86px;top:86px;width:12px;height:12px;background:#0e0e0e"></div>
</div>
<div class="t" style="left:0px;top:142.15px;font-size:14px;line-height:14px;color:#ffffff;font-weight:bold;width:178px;text-align:center;"><span style="letter-spacing:-1.1px">SECTEUR</span> 13</div>
</div>
<div class="a" style="left:869px;top:558px;width:180px;height:180px;border:1px solid #2a3346;background:#0a0f1c">
<div class="a" style="left:37px;top:20px;width:104px;height:104px;background:#000">
<div class="a" style="left:6px;top:6px;width:12px;height:12px;background:#0e0e0e"></div>
<div class="a" style="left:22px;top:6px;width:12px;height:12px;background:#0e0e0e"></div>
<div class="a" style="left:38px;top:6px;width:12px;height:12px;background:#0e0e0e"></div>
<div class="a" style="left:54px;top:6px;width:12px;height:12px;background:#0e0e0e"></div>
<div class="a" style="left:70px;top:6px;width:12px;height:12px;background:#0e0e0e"></div>
<div class="a" style="left:86px;top:6px;width:12px;height:12px;background:#0e0e0e"></div>
<div class="a" style="left:6px;top:22px;width:12px;height:12px;background:#0e0e0e"></div>
<div class="a" style="left:22px;top:22px;width:12px;height:12px;background:#0e0e0e"></div>
<div class="a" style="left:38px;top:22px;width:12px;height:12px;background:#0e0e0e"></div>
<div class="a" style="left:54px;top:22px;width:12px;height:12px;background:#0e0e0e"></div>
<div class="a" style="left:70px;top:22px;width:12px;height:12px;background:#0e0e0e"></div>
<div class="a" style="left:86px;top:22px;width:12px;height:12px;background:#0e0e0e"></div>
<div class="a" style="left:6px;top:38px;width:12px;height:12px;background:#0e0e0e"></div>
<div class="a" style="left:22px;top:38px;width:12px;height:12px;background:#0e0e0e"></div>
<div class="a" style="left:38px;top:38px;width:12px;height:12px;background:#0e0e0e"></div>
<div class="a" style="left:54px;top:38px;width:12px;height:12px;background:#0e0e0e"></div>
<div class="a" style="left:70px;top:38px;width:12px;height:12px;background:#0e0e0e"></div>
<div class="a" style="left:86px;top:38px;width:12px;height:12px;background:#0e0e0e"></div>
<div class="a" style="left:6px;top:54px;width:12px;height:12px;background:#0e0e0e"></div>
<div class="a" style="left:22px;top:54px;width:12px;height:12px;background:#0e0e0e"></div>
<div class="a" style="left:38px;top:54px;width:12px;height:12px;background:#0e0e0e"></div>
<div class="a" style="left:54px;top:54px;width:12px;height:12px;background:#0e0e0e"></div>
<div class="a" style="left:70px;top:54px;width:12px;height:12px;background:#0e0e0e"></div>
<div class="a" style="left:86px;top:54px;width:12px;height:12px;background:#0e0e0e"></div>
<div class="a" style="left:6px;top:70px;width:12px;height:12px;background:#0e0e0e"></div>
<div class="a" style="left:22px;top:70px;width:12px;height:12px;background:#0e0e0e"></div>
<div class="a" style="left:38px;top:70px;width:12px;height:12px;background:#0e0e0e"></div>
<div class="a" style="left:54px;top:70px;width:12px;height:12px;background:#0e0e0e"></div>
<div class="a" style="left:70px;top:70px;width:12px;height:12px;background:#0e0e0e"></div>
<div class="a" style="left:86px;top:70px;width:12px;height:12px;background:#0e0e0e"></div>
<div class="a" style="left:6px;top:86px;width:12px;height:12px;background:#0e0e0e"></div>
<div class="a" style="left:22px;top:86px;width:12px;height:12px;background:#0e0e0e"></div>
<div class="a" style="left:38px;top:86px;width:12px;height:12px;background:#0e0e0e"></div>
<div class="a" style="left:54px;top:86px;width:12px;height:12px;background:#0e0e0e"></div>
<div class="a" style="left:70px;top:86px;width:12px;height:12px;background:#0e0e0e"></div>
<div class="a" style="left:86px;top:86px;width:12px;height:12px;background:#0e0e0e"></div>
</div>
<div class="t" style="left:0px;top:142.15px;font-size:14px;line-height:14px;color:#ffffff;font-weight:bold;width:178px;text-align:center;"><span style="letter-spacing:-1.1px">SECTEUR</span> 14</div>
</div>
<div class="a" style="left:1064px;top:558px;width:180px;height:180px;border:1px solid #2a3346;background:#0a0f1c">
<div class="a" style="left:37px;top:20px;width:104px;height:104px;background:#000">
<div class="a" style="left:6px;top:6px;width:12px;height:12px;background:#0e0e0e"></div>
<div class="a" style="left:22px;top:6px;width:12px;height:12px;background:#0e0e0e"></div>
<div class="a" style="left:38px;top:6px;width:12px;height:12px;background:#0e0e0e"></div>
<div class="a" style="left:54px;top:6px;width:12px;height:12px;background:#0e0e0e"></div>
<div class="a" style="left:70px;top:6px;width:12px;height:12px;background:#0e0e0e"></div>
<div class="a" style="left:86px;top:6px;width:12px;height:12px;background:#0e0e0e"></div>
<div class="a" style="left:6px;top:22px;width:12px;height:12px;background:#0e0e0e"></div>
<div class="a" style="left:22px;top:22px;width:12px;height:12px;background:#0e0e0e"></div>
<div class="a" style="left:38px;top:22px;width:12px;height:12px;background:#0e0e0e"></div>
<div class="a" style="left:54px;top:22px;width:12px;height:12px;background:#0e0e0e"></div>
<div class="a" style="left:70px;top:22px;width:12px;height:12px;background:#0e0e0e"></div>
<div class="a" style="left:86px;top:22px;width:12px;height:12px;background:#0e0e0e"></div>
<div class="a" style="left:6px;top:38px;width:12px;height:12px;background:#0e0e0e"></div>
<div class="a" style="left:22px;top:38px;width:12px;height:12px;background:#0e0e0e"></div>
<div class="a" style="left:38px;top:38px;width:12px;height:12px;background:#0e0e0e"></div>
<div class="a" style="left:54px;top:38px;width:12px;height:12px;background:#0e0e0e"></div>
<div class="a" style="left:70px;top:38px;width:12px;height:12px;background:#0e0e0e"></div>
<div class="a" style="left:86px;top:38px;width:12px;height:12px;background:#0e0e0e"></div>
<div class="a" style="left:6px;top:54px;width:12px;height:12px;background:#0e0e0e"></div>
<div class="a" style="left:22px;top:54px;width:12px;height:12px;background:#0e0e0e"></div>
<div class="a" style="left:38px;top:54px;width:12px;height:12px;background:#0e0e0e"></div>
<div class="a" style="left:54px;top:54px;width:12px;height:12px;background:#0e0e0e"></div>
<div class="a" style="left:70px;top:54px;width:12px;height:12px;background:#0e0e0e"></div>
<div class="a" style="left:86px;top:54px;width:12px;height:12px;background:#0e0e0e"></div>
<div class="a" style="left:6px;top:70px;width:12px;height:12px;background:#0e0e0e"></div>
<div class="a" style="left:22px;top:70px;width:12px;height:12px;background:#0e0e0e"></div>
<div class="a" style="left:38px;top:70px;width:12px;height:12px;background:#0e0e0e"></div>
<div class="a" style="left:54px;top:70px;width:12px;height:12px;background:#0e0e0e"></div>
<div class="a" style="left:70px;top:70px;width:12px;height:12px;background:#0e0e0e"></div>
<div class="a" style="left:86px;top:70px;width:12px;height:12px;background:#0e0e0e"></div>
<div class="a" style="left:6px;top:86px;width:12px;height:12px;background:#0e0e0e"></div>
<div class="a" style="left:22px;top:86px;width:12px;height:12px;background:#0e0e0e"></div>
<div class="a" style="left:38px;top:86px;width:12px;height:12px;background:#0e0e0e"></div>
<div class="a" style="left:54px;top:86px;width:12px;height:12px;background:#0e0e0e"></div>
<div class="a" style="left:70px;top:86px;width:12px;height:12px;background:#0e0e0e"></div>
<div class="a" style="left:86px;top:86px;width:12px;height:12px;background:#0e0e0e"></div>
</div>
<div class="t" style="left:0px;top:142.15px;font-size:14px;line-height:14px;color:#ffffff;font-weight:bold;width:178px;text-align:center;"><span style="letter-spacing:-1.1px">SECTEUR</span> 15</div>
</div>
<div class="a" style="left:1259px;top:558px;width:180px;height:180px;border:1px solid #2a3346;background:#0a0f1c">
<div class="a" style="left:37px;top:20px;width:104px;height:104px;background:#000">
<div class="a" style="left:6px;top:6px;width:12px;height:12px;background:#0e0e0e"></div>
<div class="a" style="left:22px;top:6px;width:12px;height:12px;background:#0e0e0e"></div>
<div class="a" style="left:38px;top:6px;width:12px;height:12px;background:#0e0e0e"></div>
<div class="a" style="left:54px;top:6px;width:12px;height:12px;background:#0e0e0e"></div>
<div class="a" style="left:70px;top:6px;width:12px;height:12px;background:#0e0e0e"></div>
<div class="a" style="left:86px;top:6px;width:12px;height:12px;background:#0e0e0e"></div>
<div class="a" style="left:6px;top:22px;width:12px;height:12px;background:#0e0e0e"></div>
<div class="a" style="left:22px;top:22px;width:12px;height:12px;background:#0e0e0e"></div>
<div class="a" style="left:38px;top:22px;width:12px;height:12px;background:#0e0e0e"></div>
<div class="a" style="left:54px;top:22px;width:12px;height:12px;background:#0e0e0e"></div>
<div class="a" style="left:70px;top:22px;width:12px;height:12px;background:#0e0e0e"></div>
<div class="a" style="left:86px;top:22px;width:12px;height:12px;background:#0e0e0e"></div>
<div class="a" style="left:6px;top:38px;width:12px;height:12px;background:#0e0e0e"></div>
<div class="a" style="left:22px;top:38px;width:12px;height:12px;background:#0e0e0e"></div>
<div class="a" style="left:38px;top:38px;width:12px;height:12px;background:#0e0e0e"></div>
<div class="a" style="left:54px;top:38px;width:12px;height:12px;background:#0e0e0e"></div>
<div class="a" style="left:70px;top:38px;width:12px;height:12px;background:#0e0e0e"></div>
<div class="a" style="left:86px;top:38px;width:12px;height:12px;background:#0e0e0e"></div>
<div class="a" style="left:6px;top:54px;width:12px;height:12px;background:#0e0e0e"></div>
<div class="a" style="left:22px;top:54px;width:12px;height:12px;background:#0e0e0e"></div>
<div class="a" style="left:38px;top:54px;width:12px;height:12px;background:#0e0e0e"></div>
<div class="a" style="left:54px;top:54px;width:12px;height:12px;background:#0e0e0e"></div>
<div class="a" style="left:70px;top:54px;width:12px;height:12px;background:#0e0e0e"></div>
<div class="a" style="left:86px;top:54px;width:12px;height:12px;background:#0e0e0e"></div>
<div class="a" style="left:6px;top:70px;width:12px;height:12px;background:#0e0e0e"></div>
<div class="a" style="left:22px;top:70px;width:12px;height:12px;background:#0e0e0e"></div>
<div class="a" style="left:38px;top:70px;width:12px;height:12px;background:#0e0e0e"></div>
<div class="a" style="left:54px;top:70px;width:12px;height:12px;background:#0e0e0e"></div>
<div class="a" style="left:70px;top:70px;width:12px;height:12px;background:#0e0e0e"></div>
<div class="a" style="left:86px;top:70px;width:12px;height:12px;background:#0e0e0e"></div>
<div class="a" style="left:6px;top:86px;width:12px;height:12px;background:#0e0e0e"></div>
<div class="a" style="left:22px;top:86px;width:12px;height:12px;background:#0e0e0e"></div>
<div class="a" style="left:38px;top:86px;width:12px;height:12px;background:#0e0e0e"></div>
<div class="a" style="left:54px;top:86px;width:12px;height:12px;background:#0e0e0e"></div>
<div class="a" style="left:70px;top:86px;width:12px;height:12px;background:#0e0e0e"></div>
<div class="a" style="left:86px;top:86px;width:12px;height:12px;background:#0e0e0e"></div>
</div>
<div class="t" style="left:0px;top:142.15px;font-size:14px;line-height:14px;color:#ffffff;font-weight:bold;width:178px;text-align:center;"><span style="letter-spacing:-1.1px">SECTEUR</span> 16</div>
</div>
<div class="a" style="left:1454px;top:558px;width:180px;height:180px;border:1px solid #2a3346;background:#0a0f1c">
<div class="a" style="left:37px;top:20px;width:104px;height:104px;background:#000">
<div class="a" style="left:6px;top:6px;width:12px;height:12px;background:#0e0e0e"></div>
<div class="a" style="left:22px;top:6px;width:12px;height:12px;background:#0e0e0e"></div>
<div class="a" style="left:38px;top:6px;width:12px;height:12px;background:#0e0e0e"></div>
<div class="a" style="left:54px;top:6px;width:12px;height:12px;background:#0e0e0e"></div>
<div class="a" style="left:70px;top:6px;width:12px;height:12px;background:#0e0e0e"></div>
<div class="a" style="left:86px;top:6px;width:12px;height:12px;background:#0e0e0e"></div>
<div class="a" style="left:6px;top:22px;width:12px;height:12px;background:#0e0e0e"></div>
<div class="a" style="left:22px;top:22px;width:12px;height:12px;background:#0e0e0e"></div>
<div class="a" style="left:38px;top:22px;width:12px;height:12px;background:#0e0e0e"></div>
<div class="a" style="left:54px;top:22px;width:12px;height:12px;background:#0e0e0e"></div>
<div class="a" style="left:70px;top:22px;width:12px;height:12px;background:#0e0e0e"></div>
<div class="a" style="left:86px;top:22px;width:12px;height:12px;background:#0e0e0e"></div>
<div class="a" style="left:6px;top:38px;width:12px;height:12px;background:#0e0e0e"></div>
<div class="a" style="left:22px;top:38px;width:12px;height:12px;background:#0e0e0e"></div>
<div class="a" style="left:38px;top:38px;width:12px;height:12px;background:#0e0e0e"></div>
<div class="a" style="left:54px;top:38px;width:12px;height:12px;background:#0e0e0e"></div>
<div class="a" style="left:70px;top:38px;width:12px;height:12px;background:#0e0e0e"></div>
<div class="a" style="left:86px;top:38px;width:12px;height:12px;background:#0e0e0e"></div>
<div class="a" style="left:6px;top:54px;width:12px;height:12px;background:#0e0e0e"></div>
<div class="a" style="left:22px;top:54px;width:12px;height:12px;background:#0e0e0e"></div>
<div class="a" style="left:38px;top:54px;width:12px;height:12px;background:#0e0e0e"></div>
<div class="a" style="left:54px;top:54px;width:12px;height:12px;background:#0e0e0e"></div>
<div class="a" style="left:70px;top:54px;width:12px;height:12px;background:#0e0e0e"></div>
<div class="a" style="left:86px;top:54px;width:12px;height:12px;background:#0e0e0e"></div>
<div class="a" style="left:6px;top:70px;width:12px;height:12px;background:#0e0e0e"></div>
<div class="a" style="left:22px;top:70px;width:12px;height:12px;background:#0e0e0e"></div>
<div class="a" style="left:38px;top:70px;width:12px;height:12px;background:#0e0e0e"></div>
<div class="a" style="left:54px;top:70px;width:12px;height:12px;background:#0e0e0e"></div>
<div class="a" style="left:70px;top:70px;width:12px;height:12px;background:#0e0e0e"></div>
<div class="a" style="left:86px;top:70px;width:12px;height:12px;background:#0e0e0e"></div>
<div class="a" style="left:6px;top:86px;width:12px;height:12px;background:#0e0e0e"></div>
<div class="a" style="left:22px;top:86px;width:12px;height:12px;background:#0e0e0e"></div>
<div class="a" style="left:38px;top:86px;width:12px;height:12px;background:#0e0e0e"></div>
<div class="a" style="left:54px;top:86px;width:12px;height:12px;background:#0e0e0e"></div>
<div class="a" style="left:70px;top:86px;width:12px;height:12px;background:#0e0e0e"></div>
<div class="a" style="left:86px;top:86px;width:12px;height:12px;background:#0e0e0e"></div>
</div>
<div class="t" style="left:0px;top:142.15px;font-size:14px;line-height:14px;color:#ffffff;font-weight:bold;width:178px;text-align:center;"><span style="letter-spacing:-1.1px">SECTEUR</span> 17</div>
</div>
<div class="a" style="left:1649px;top:558px;width:180px;height:180px;border:1px solid #2a3346;background:#0a0f1c">
<div class="a" style="left:37px;top:20px;width:104px;height:104px;background:#000">
<div class="a" style="left:6px;top:6px;width:12px;height:12px;background:#0e0e0e"></div>
<div class="a" style="left:22px;top:6px;width:12px;height:12px;background:#0e0e0e"></div>
<div class="a" style="left:38px;top:6px;width:12px;height:12px;background:#0e0e0e"></div>
<div class="a" style="left:54px;top:6px;width:12px;height:12px;background:#0e0e0e"></div>
<div class="a" style="left:70px;top:6px;width:12px;height:12px;background:#0e0e0e"></div>
<div class="a" style="left:86px;top:6px;width:12px;height:12px;background:#0e0e0e"></div>
<div class="a" style="left:6px;top:22px;width:12px;height:12px;background:#0e0e0e"></div>
<div class="a" style="left:22px;top:22px;width:12px;height:12px;background:#0e0e0e"></div>
<div class="a" style="left:38px;top:22px;width:12px;height:12px;background:#0e0e0e"></div>
<div class="a" style="left:54px;top:22px;width:12px;height:12px;background:#0e0e0e"></div>
<div class="a" style="left:70px;top:22px;width:12px;height:12px;background:#0e0e0e"></div>
<div class="a" style="left:86px;top:22px;width:12px;height:12px;background:#0e0e0e"></div>
<div class="a" style="left:6px;top:38px;width:12px;height:12px;background:#0e0e0e"></div>
<div class="a" style="left:22px;top:38px;width:12px;height:12px;background:#0e0e0e"></div>
<div class="a" style="left:38px;top:38px;width:12px;height:12px;background:#0e0e0e"></div>
<div class="a" style="left:54px;top:38px;width:12px;height:12px;background:#0e0e0e"></div>
<div class="a" style="left:70px;top:38px;width:12px;height:12px;background:#0e0e0e"></div>
<div class="a" style="left:86px;top:38px;width:12px;height:12px;background:#0e0e0e"></div>
<div class="a" style="left:6px;top:54px;width:12px;height:12px;background:#0e0e0e"></div>
<div class="a" style="left:22px;top:54px;width:12px;height:12px;background:#0e0e0e"></div>
<div class="a" style="left:38px;top:54px;width:12px;height:12px;background:#0e0e0e"></div>
<div class="a" style="left:54px;top:54px;width:12px;height:12px;background:#0e0e0e"></div>
<div class="a" style="left:70px;top:54px;width:12px;height:12px;background:#0e0e0e"></div>
<div class="a" style="left:86px;top:54px;width:12px;height:12px;background:#0e0e0e"></div>
<div class="a" style="left:6px;top:70px;width:12px;height:12px;background:#0e0e0e"></div>
<div class="a" style="left:22px;top:70px;width:12px;height:12px;background:#0e0e0e"></div>
<div class="a" style="left:38px;top:70px;width:12px;height:12px;background:#0e0e0e"></div>
<div class="a" style="left:54px;top:70px;width:12px;height:12px;background:#0e0e0e"></div>
<div class="a" style="left:70px;top:70px;width:12px;height:12px;background:#0e0e0e"></div>
<div class="a" style="left:86px;top:70px;width:12px;height:12px;background:#0e0e0e"></div>
<div class="a" style="left:6px;top:86px;width:12px;height:12px;background:#0e0e0e"></div>
<div class="a" style="left:22px;top:86px;width:12px;height:12px;background:#0e0e0e"></div>
<div class="a" style="left:38px;top:86px;width:12px;height:12px;background:#0e0e0e"></div>
<div class="a" style="left:54px;top:86px;width:12px;height:12px;background:#0e0e0e"></div>
<div class="a" style="left:70px;top:86px;width:12px;height:12px;background:#0e0e0e"></div>
<div class="a" style="left:86px;top:86px;width:12px;height:12px;background:#0e0e0e"></div>
</div>
<div class="t" style="left:0px;top:142.15px;font-size:14px;line-height:14px;color:#ffffff;font-weight:bold;width:178px;text-align:center;"><span style="letter-spacing:-1.1px">SECTEUR</span> 18</div>
</div>
<div class="a" style="left:674px;top:753px;width:180px;height:180px;border:1px solid #2a3346;background:#0a0f1c">
<div class="a" style="left:37px;top:20px;width:104px;height:104px;background:#000">
<div class="a" style="left:6px;top:6px;width:12px;height:12px;background:#0e0e0e"></div>
<div class="a" style="left:22px;top:6px;width:12px;height:12px;background:#0e0e0e"></div>
<div class="a" style="left:38px;top:6px;width:12px;height:12px;background:#0e0e0e"></div>
<div class="a" style="left:54px;top:6px;width:12px;height:12px;background:#0e0e0e"></div>
<div class="a" style="left:70px;top:6px;width:12px;height:12px;background:#0e0e0e"></div>
<div class="a" style="left:86px;top:6px;width:12px;height:12px;background:#0e0e0e"></div>
<div class="a" style="left:6px;top:22px;width:12px;height:12px;background:#0e0e0e"></div>
<div class="a" style="left:22px;top:22px;width:12px;height:12px;background:#0e0e0e"></div>
<div class="a" style="left:38px;top:22px;width:12px;height:12px;background:#0e0e0e"></div>
<div class="a" style="left:54px;top:22px;width:12px;height:12px;background:#0e0e0e"></div>
<div class="a" style="left:70px;top:22px;width:12px;height:12px;background:#0e0e0e"></div>
<div class="a" style="left:86px;top:22px;width:12px;height:12px;background:#0e0e0e"></div>
<div class="a" style="left:6px;top:38px;width:12px;height:12px;background:#0e0e0e"></div>
<div class="a" style="left:22px;top:38px;width:12px;height:12px;background:#0e0e0e"></div>
<div class="a" style="left:38px;top:38px;width:12px;height:12px;background:#0e0e0e"></div>
<div class="a" style="left:54px;top:38px;width:12px;height:12px;background:#0e0e0e"></div>
<div class="a" style="left:70px;top:38px;width:12px;height:12px;background:#0e0e0e"></div>
<div class="a" style="left:86px;top:38px;width:12px;height:12px;background:#0e0e0e"></div>
<div class="a" style="left:6px;top:54px;width:12px;height:12px;background:#0e0e0e"></div>
<div class="a" style="left:22px;top:54px;width:12px;height:12px;background:#0e0e0e"></div>
<div class="a" style="left:38px;top:54px;width:12px;height:12px;background:#0e0e0e"></div>
<div class="a" style="left:54px;top:54px;width:12px;height:12px;background:#0e0e0e"></div>
<div class="a" style="left:70px;top:54px;width:12px;height:12px;background:#0e0e0e"></div>
<div class="a" style="left:86px;top:54px;width:12px;height:12px;background:#0e0e0e"></div>
<div class="a" style="left:6px;top:70px;width:12px;height:12px;background:#0e0e0e"></div>
<div class="a" style="left:22px;top:70px;width:12px;height:12px;background:#0e0e0e"></div>
<div class="a" style="left:38px;top:70px;width:12px;height:12px;background:#0e0e0e"></div>
<div class="a" style="left:54px;top:70px;width:12px;height:12px;background:#0e0e0e"></div>
<div class="a" style="left:70px;top:70px;width:12px;height:12px;background:#0e0e0e"></div>
<div class="a" style="left:86px;top:70px;width:12px;height:12px;background:#0e0e0e"></div>
<div class="a" style="left:6px;top:86px;width:12px;height:12px;background:#0e0e0e"></div>
<div class="a" style="left:22px;top:86px;width:12px;height:12px;background:#0e0e0e"></div>
<div class="a" style="left:38px;top:86px;width:12px;height:12px;background:#0e0e0e"></div>
<div class="a" style="left:54px;top:86px;width:12px;height:12px;background:#0e0e0e"></div>
<div class="a" style="left:70px;top:86px;width:12px;height:12px;background:#0e0e0e"></div>
<div class="a" style="left:86px;top:86px;width:12px;height:12px;background:#0e0e0e"></div>
</div>
<div class="t" style="left:0px;top:142.15px;font-size:14px;line-height:14px;color:#ffffff;font-weight:bold;width:178px;text-align:center;"><span style="letter-spacing:-1.1px">SECTEUR</span> 19</div>
</div>
<div class="a" style="left:869px;top:753px;width:180px;height:180px;border:1px solid #2a3346;background:#0a0f1c">
<div class="a" style="left:37px;top:20px;width:104px;height:104px;background:#000">
<div class="a" style="left:6px;top:6px;width:12px;height:12px;background:#0e0e0e"></div>
<div class="a" style="left:22px;top:6px;width:12px;height:12px;background:#0e0e0e"></div>
<div class="a" style="left:38px;top:6px;width:12px;height:12px;background:#0e0e0e"></div>
<div class="a" style="left:54px;top:6px;width:12px;height:12px;background:#0e0e0e"></div>
<div class="a" style="left:70px;top:6px;width:12px;height:12px;background:#0e0e0e"></div>
<div class="a" style="left:86px;top:6px;width:12px;height:12px;background:#0e0e0e"></div>
<div class="a" style="left:6px;top:22px;width:12px;height:12px;background:#0e0e0e"></div>
<div class="a" style="left:22px;top:22px;width:12px;height:12px;background:#0e0e0e"></div>
<div class="a" style="left:38px;top:22px;width:12px;height:12px;background:#0e0e0e"></div>
<div class="a" style="left:54px;top:22px;width:12px;height:12px;background:#0e0e0e"></div>
<div class="a" style="left:70px;top:22px;width:12px;height:12px;background:#0e0e0e"></div>
<div class="a" style="left:86px;top:22px;width:12px;height:12px;background:#0e0e0e"></div>
<div class="a" style="left:6px;top:38px;width:12px;height:12px;background:#0e0e0e"></div>
<div class="a" style="left:22px;top:38px;width:12px;height:12px;background:#0e0e0e"></div>
<div class="a" style="left:38px;top:38px;width:12px;height:12px;background:#0e0e0e"></div>
<div class="a" style="left:54px;top:38px;width:12px;height:12px;background:#0e0e0e"></div>
<div class="a" style="left:70px;top:38px;width:12px;height:12px;background:#0e0e0e"></div>
<div class="a" style="left:86px;top:38px;width:12px;height:12px;background:#0e0e0e"></div>
<div class="a" style="left:6px;top:54px;width:12px;height:12px;background:#0e0e0e"></div>
<div class="a" style="left:22px;top:54px;width:12px;height:12px;background:#0e0e0e"></div>
<div class="a" style="left:38px;top:54px;width:12px;height:12px;background:#0e0e0e"></div>
<div class="a" style="left:54px;top:54px;width:12px;height:12px;background:#0e0e0e"></div>
<div class="a" style="left:70px;top:54px;width:12px;height:12px;background:#0e0e0e"></div>
<div class="a" style="left:86px;top:54px;width:12px;height:12px;background:#0e0e0e"></div>
<div class="a" style="left:6px;top:70px;width:12px;height:12px;background:#0e0e0e"></div>
<div class="a" style="left:22px;top:70px;width:12px;height:12px;background:#0e0e0e"></div>
<div class="a" style="left:38px;top:70px;width:12px;height:12px;background:#0e0e0e"></div>
<div class="a" style="left:54px;top:70px;width:12px;height:12px;background:#0e0e0e"></div>
<div class="a" style="left:70px;top:70px;width:12px;height:12px;background:#0e0e0e"></div>
<div class="a" style="left:86px;top:70px;width:12px;height:12px;background:#0e0e0e"></div>
<div class="a" style="left:6px;top:86px;width:12px;height:12px;background:#0e0e0e"></div>
<div class="a" style="left:22px;top:86px;width:12px;height:12px;background:#0e0e0e"></div>
<div class="a" style="left:38px;top:86px;width:12px;height:12px;background:#0e0e0e"></div>
<div class="a" style="left:54px;top:86px;width:12px;height:12px;background:#0e0e0e"></div>
<div class="a" style="left:70px;top:86px;width:12px;height:12px;background:#0e0e0e"></div>
<div class="a" style="left:86px;top:86px;width:12px;height:12px;background:#0e0e0e"></div>
</div>
<div class="t" style="left:0px;top:142.15px;font-size:14px;line-height:14px;color:#ffffff;font-weight:bold;width:178px;text-align:center;"><span style="letter-spacing:-1.1px">SECTEUR</span> 20</div>
</div>
<div class="a" style="left:1064px;top:753px;width:180px;height:180px;border:1px solid #2a3346;background:#0a0f1c">
<div class="a" style="left:37px;top:20px;width:104px;height:104px;background:#000">
<div class="a" style="left:6px;top:6px;width:12px;height:12px;background:#0e0e0e"></div>
<div class="a" style="left:22px;top:6px;width:12px;height:12px;background:#0e0e0e"></div>
<div class="a" style="left:38px;top:6px;width:12px;height:12px;background:#0e0e0e"></div>
<div class="a" style="left:54px;top:6px;width:12px;height:12px;background:#0e0e0e"></div>
<div class="a" style="left:70px;top:6px;width:12px;height:12px;background:#0e0e0e"></div>
<div class="a" style="left:86px;top:6px;width:12px;height:12px;background:#0e0e0e"></div>
<div class="a" style="left:6px;top:22px;width:12px;height:12px;background:#0e0e0e"></div>
<div class="a" style="left:22px;top:22px;width:12px;height:12px;background:#0e0e0e"></div>
<div class="a" style="left:38px;top:22px;width:12px;height:12px;background:#0e0e0e"></div>
<div class="a" style="left:54px;top:22px;width:12px;height:12px;background:#0e0e0e"></div>
<div class="a" style="left:70px;top:22px;width:12px;height:12px;background:#0e0e0e"></div>
<div class="a" style="left:86px;top:22px;width:12px;height:12px;background:#0e0e0e"></div>
<div class="a" style="left:6px;top:38px;width:12px;height:12px;background:#0e0e0e"></div>
<div class="a" style="left:22px;top:38px;width:12px;height:12px;background:#0e0e0e"></div>
<div class="a" style="left:38px;top:38px;width:12px;height:12px;background:#0e0e0e"></div>
<div class="a" style="left:54px;top:38px;width:12px;height:12px;background:#0e0e0e"></div>
<div class="a" style="left:70px;top:38px;width:12px;height:12px;background:#0e0e0e"></div>
<div class="a" style="left:86px;top:38px;width:12px;height:12px;background:#0e0e0e"></div>
<div class="a" style="left:6px;top:54px;width:12px;height:12px;background:#0e0e0e"></div>
<div class="a" style="left:22px;top:54px;width:12px;height:12px;background:#0e0e0e"></div>
<div class="a" style="left:38px;top:54px;width:12px;height:12px;background:#0e0e0e"></div>
<div class="a" style="left:54px;top:54px;width:12px;height:12px;background:#0e0e0e"></div>
<div class="a" style="left:70px;top:54px;width:12px;height:12px;background:#0e0e0e"></div>
<div class="a" style="left:86px;top:54px;width:12px;height:12px;background:#0e0e0e"></div>
<div class="a" style="left:6px;top:70px;width:12px;height:12px;background:#0e0e0e"></div>
<div class="a" style="left:22px;top:70px;width:12px;height:12px;background:#0e0e0e"></div>
<div class="a" style="left:38px;top:70px;width:12px;height:12px;background:#0e0e0e"></div>
<div class="a" style="left:54px;top:70px;width:12px;height:12px;background:#0e0e0e"></div>
<div class="a" style="left:70px;top:70px;width:12px;height:12px;background:#0e0e0e"></div>
<div class="a" style="left:86px;top:70px;width:12px;height:12px;background:#0e0e0e"></div>
<div class="a" style="left:6px;top:86px;width:12px;height:12px;background:#0e0e0e"></div>
<div class="a" style="left:22px;top:86px;width:12px;height:12px;background:#0e0e0e"></div>
<div class="a" style="left:38px;top:86px;width:12px;height:12px;background:#0e0e0e"></div>
<div class="a" style="left:54px;top:86px;width:12px;height:12px;background:#0e0e0e"></div>
<div class="a" style="left:70px;top:86px;width:12px;height:12px;background:#0e0e0e"></div>
<div class="a" style="left:86px;top:86px;width:12px;height:12px;background:#0e0e0e"></div>
</div>
<div class="t" style="left:0px;top:142.15px;font-size:14px;line-height:14px;color:#ffffff;font-weight:bold;width:178px;text-align:center;"><span style="letter-spacing:-1.1px">SECTEUR</span> 21</div>
</div>
<div class="a" style="left:1259px;top:753px;width:180px;height:180px;border:1px solid #2a3346;background:#0a0f1c">
<div class="a" style="left:37px;top:20px;width:104px;height:104px;background:#000">
<div class="a" style="left:6px;top:6px;width:12px;height:12px;background:#0e0e0e"></div>
<div class="a" style="left:22px;top:6px;width:12px;height:12px;background:#0e0e0e"></div>
<div class="a" style="left:38px;top:6px;width:12px;height:12px;background:#0e0e0e"></div>
<div class="a" style="left:54px;top:6px;width:12px;height:12px;background:#0e0e0e"></div>
<div class="a" style="left:70px;top:6px;width:12px;height:12px;background:#0e0e0e"></div>
<div class="a" style="left:86px;top:6px;width:12px;height:12px;background:#0e0e0e"></div>
<div class="a" style="left:6px;top:22px;width:12px;height:12px;background:#0e0e0e"></div>
<div class="a" style="left:22px;top:22px;width:12px;height:12px;background:#0e0e0e"></div>
<div class="a" style="left:38px;top:22px;width:12px;height:12px;background:#0e0e0e"></div>
<div class="a" style="left:54px;top:22px;width:12px;height:12px;background:#0e0e0e"></div>
<div class="a" style="left:70px;top:22px;width:12px;height:12px;background:#0e0e0e"></div>
<div class="a" style="left:86px;top:22px;width:12px;height:12px;background:#0e0e0e"></div>
<div class="a" style="left:6px;top:38px;width:12px;height:12px;background:#0e0e0e"></div>
<div class="a" style="left:22px;top:38px;width:12px;height:12px;background:#0e0e0e"></div>
<div class="a" style="left:38px;top:38px;width:12px;height:12px;background:#0e0e0e"></div>
<div class="a" style="left:54px;top:38px;width:12px;height:12px;background:#0e0e0e"></div>
<div class="a" style="left:70px;top:38px;width:12px;height:12px;background:#0e0e0e"></div>
<div class="a" style="left:86px;top:38px;width:12px;height:12px;background:#0e0e0e"></div>
<div class="a" style="left:6px;top:54px;width:12px;height:12px;background:#0e0e0e"></div>
<div class="a" style="left:22px;top:54px;width:12px;height:12px;background:#0e0e0e"></div>
<div class="a" style="left:38px;top:54px;width:12px;height:12px;background:#0e0e0e"></div>
<div class="a" style="left:54px;top:54px;width:12px;height:12px;background:#0e0e0e"></div>
<div class="a" style="left:70px;top:54px;width:12px;height:12px;background:#0e0e0e"></div>
<div class="a" style="left:86px;top:54px;width:12px;height:12px;background:#0e0e0e"></div>
<div class="a" style="left:6px;top:70px;width:12px;height:12px;background:#0e0e0e"></div>
<div class="a" style="left:22px;top:70px;width:12px;height:12px;background:#0e0e0e"></div>
<div class="a" style="left:38px;top:70px;width:12px;height:12px;background:#0e0e0e"></div>
<div class="a" style="left:54px;top:70px;width:12px;height:12px;background:#0e0e0e"></div>
<div class="a" style="left:70px;top:70px;width:12px;height:12px;background:#0e0e0e"></div>
<div class="a" style="left:86px;top:70px;width:12px;height:12px;background:#0e0e0e"></div>
<div class="a" style="left:6px;top:86px;width:12px;height:12px;background:#0e0e0e"></div>
<div class="a" style="left:22px;top:86px;width:12px;height:12px;background:#0e0e0e"></div>
<div class="a" style="left:38px;top:86px;width:12px;height:12px;background:#0e0e0e"></div>
<div class="a" style="left:54px;top:86px;width:12px;height:12px;background:#0e0e0e"></div>
<div class="a" style="left:70px;top:86px;width:12px;height:12px;background:#0e0e0e"></div>
<div class="a" style="left:86px;top:86px;width:12px;height:12px;background:#0e0e0e"></div>
</div>
<div class="t" style="left:0px;top:142.15px;font-size:14px;line-height:14px;color:#ffffff;font-weight:bold;width:178px;text-align:center;"><span style="letter-spacing:-1.1px">SECTEUR</span> 22</div>
</div>
<div class="a" style="left:1454px;top:753px;width:180px;height:180px;border:1px solid #2a3346;background:#0a0f1c">
<div class="a" style="left:37px;top:20px;width:104px;height:104px;background:#000">
<div class="a" style="left:6px;top:6px;width:12px;height:12px;background:#0e0e0e"></div>
<div class="a" style="left:22px;top:6px;width:12px;height:12px;background:#0e0e0e"></div>
<div class="a" style="left:38px;top:6px;width:12px;height:12px;background:#0e0e0e"></div>
<div class="a" style="left:54px;top:6px;width:12px;height:12px;background:#0e0e0e"></div>
<div class="a" style="left:70px;top:6px;width:12px;height:12px;background:#0e0e0e"></div>
<div class="a" style="left:86px;top:6px;width:12px;height:12px;background:#0e0e0e"></div>
<div class="a" style="left:6px;top:22px;width:12px;height:12px;background:#0e0e0e"></div>
<div class="a" style="left:22px;top:22px;width:12px;height:12px;background:#0e0e0e"></div>
<div class="a" style="left:38px;top:22px;width:12px;height:12px;background:#0e0e0e"></div>
<div class="a" style="left:54px;top:22px;width:12px;height:12px;background:#0e0e0e"></div>
<div class="a" style="left:70px;top:22px;width:12px;height:12px;background:#0e0e0e"></div>
<div class="a" style="left:86px;top:22px;width:12px;height:12px;background:#0e0e0e"></div>
<div class="a" style="left:6px;top:38px;width:12px;height:12px;background:#0e0e0e"></div>
<div class="a" style="left:22px;top:38px;width:12px;height:12px;background:#0e0e0e"></div>
<div class="a" style="left:38px;top:38px;width:12px;height:12px;background:#0e0e0e"></div>
<div class="a" style="left:54px;top:38px;width:12px;height:12px;background:#0e0e0e"></div>
<div class="a" style="left:70px;top:38px;width:12px;height:12px;background:#0e0e0e"></div>
<div class="a" style="left:86px;top:38px;width:12px;height:12px;background:#0e0e0e"></div>
<div class="a" style="left:6px;top:54px;width:12px;height:12px;background:#0e0e0e"></div>
<div class="a" style="left:22px;top:54px;width:12px;height:12px;background:#0e0e0e"></div>
<div class="a" style="left:38px;top:54px;width:12px;height:12px;background:#0e0e0e"></div>
<div class="a" style="left:54px;top:54px;width:12px;height:12px;background:#0e0e0e"></div>
<div class="a" style="left:70px;top:54px;width:12px;height:12px;background:#0e0e0e"></div>
<div class="a" style="left:86px;top:54px;width:12px;height:12px;background:#0e0e0e"></div>
<div class="a" style="left:6px;top:70px;width:12px;height:12px;background:#0e0e0e"></div>
<div class="a" style="left:22px;top:70px;width:12px;height:12px;background:#0e0e0e"></div>
<div class="a" style="left:38px;top:70px;width:12px;height:12px;background:#0e0e0e"></div>
<div class="a" style="left:54px;top:70px;width:12px;height:12px;background:#0e0e0e"></div>
<div class="a" style="left:70px;top:70px;width:12px;height:12px;background:#0e0e0e"></div>
<div class="a" style="left:86px;top:70px;width:12px;height:12px;background:#0e0e0e"></div>
<div class="a" style="left:6px;top:86px;width:12px;height:12px;background:#0e0e0e"></div>
<div class="a" style="left:22px;top:86px;width:12px;height:12px;background:#0e0e0e"></div>
<div class="a" style="left:38px;top:86px;width:12px;height:12px;background:#0e0e0e"></div>
<div class="a" style="left:54px;top:86px;width:12px;height:12px;background:#0e0e0e"></div>
<div class="a" style="left:70px;top:86px;width:12px;height:12px;background:#0e0e0e"></div>
<div class="a" style="left:86px;top:86px;width:12px;height:12px;background:#0e0e0e"></div>
</div>
<div class="t" style="left:0px;top:142.15px;font-size:14px;line-height:14px;color:#ffffff;font-weight:bold;width:178px;text-align:center;"><span style="letter-spacing:-1.1px">SECTEUR</span> 23</div>
</div>
<div class="a" style="left:1649px;top:753px;width:180px;height:180px;border:1px solid #2a3346;background:#0a0f1c">
<div class="a" style="left:37px;top:20px;width:104px;height:104px;background:#000">
<div class="a" style="left:6px;top:6px;width:12px;height:12px;background:#0e0e0e"></div>
<div class="a" style="left:22px;top:6px;width:12px;height:12px;background:#0e0e0e"></div>
<div class="a" style="left:38px;top:6px;width:12px;height:12px;background:#0e0e0e"></div>
<div class="a" style="left:54px;top:6px;width:12px;height:12px;background:#0e0e0e"></div>
<div class="a" style="left:70px;top:6px;width:12px;height:12px;background:#0e0e0e"></div>
<div class="a" style="left:86px;top:6px;width:12px;height:12px;background:#0e0e0e"></div>
<div class="a" style="left:6px;top:22px;width:12px;height:12px;background:#0e0e0e"></div>
<div class="a" style="left:22px;top:22px;width:12px;height:12px;background:#0e0e0e"></div>
<div class="a" style="left:38px;top:22px;width:12px;height:12px;background:#0e0e0e"></div>
<div class="a" style="left:54px;top:22px;width:12px;height:12px;background:#0e0e0e"></div>
<div class="a" style="left:70px;top:22px;width:12px;height:12px;background:#0e0e0e"></div>
<div class="a" style="left:86px;top:22px;width:12px;height:12px;background:#0e0e0e"></div>
<div class="a" style="left:6px;top:38px;width:12px;height:12px;background:#0e0e0e"></div>
<div class="a" style="left:22px;top:38px;width:12px;height:12px;background:#0e0e0e"></div>
<div class="a" style="left:38px;top:38px;width:12px;height:12px;background:#0e0e0e"></div>
<div class="a" style="left:54px;top:38px;width:12px;height:12px;background:#0e0e0e"></div>
<div class="a" style="left:70px;top:38px;width:12px;height:12px;background:#0e0e0e"></div>
<div class="a" style="left:86px;top:38px;width:12px;height:12px;background:#0e0e0e"></div>
<div class="a" style="left:6px;top:54px;width:12px;height:12px;background:#0e0e0e"></div>
<div class="a" style="left:22px;top:54px;width:12px;height:12px;background:#0e0e0e"></div>
<div class="a" style="left:38px;top:54px;width:12px;height:12px;background:#0e0e0e"></div>
<div class="a" style="left:54px;top:54px;width:12px;height:12px;background:#0e0e0e"></div>
<div class="a" style="left:70px;top:54px;width:12px;height:12px;background:#0e0e0e"></div>
<div class="a" style="left:86px;top:54px;width:12px;height:12px;background:#0e0e0e"></div>
<div class="a" style="left:6px;top:70px;width:12px;height:12px;background:#0e0e0e"></div>
<div class="a" style="left:22px;top:70px;width:12px;height:12px;background:#0e0e0e"></div>
<div class="a" style="left:38px;top:70px;width:12px;height:12px;background:#0e0e0e"></div>
<div class="a" style="left:54px;top:70px;width:12px;height:12px;background:#0e0e0e"></div>
<div class="a" style="left:70px;top:70px;width:12px;height:12px;background:#0e0e0e"></div>
<div class="a" style="left:86px;top:70px;width:12px;height:12px;background:#0e0e0e"></div>
<div class="a" style="left:6px;top:86px;width:12px;height:12px;background:#0e0e0e"></div>
<div class="a" style="left:22px;top:86px;width:12px;height:12px;background:#0e0e0e"></div>
<div class="a" style="left:38px;top:86px;width:12px;height:12px;background:#0e0e0e"></div>
<div class="a" style="left:54px;top:86px;width:12px;height:12px;background:#0e0e0e"></div>
<div class="a" style="left:70px;top:86px;width:12px;height:12px;background:#0e0e0e"></div>
<div class="a" style="left:86px;top:86px;width:12px;height:12px;background:#0e0e0e"></div>
</div>
<div class="t" style="left:0px;top:142.15px;font-size:14px;line-height:14px;color:#ffffff;font-weight:bold;width:178px;text-align:center;"><span style="letter-spacing:-1.1px">SECTEUR</span> 24</div>
</div>
<div class="a" style="left:674px;top:948px;width:180px;height:180px;border:1px solid #2a3346;background:#0a0f1c">
<div class="a" style="left:37px;top:20px;width:104px;height:104px;background:#000">
<div class="a" style="left:6px;top:6px;width:12px;height:12px;background:#0e0e0e"></div>
<div class="a" style="left:22px;top:6px;width:12px;height:12px;background:#0e0e0e"></div>
<div class="a" style="left:38px;top:6px;width:12px;height:12px;background:#0e0e0e"></div>
<div class="a" style="left:54px;top:6px;width:12px;height:12px;background:#0e0e0e"></div>
<div class="a" style="left:70px;top:6px;width:12px;height:12px;background:#0e0e0e"></div>
<div class="a" style="left:86px;top:6px;width:12px;height:12px;background:#0e0e0e"></div>
<div class="a" style="left:6px;top:22px;width:12px;height:12px;background:#0e0e0e"></div>
<div class="a" style="left:22px;top:22px;width:12px;height:12px;background:#0e0e0e"></div>
<div class="a" style="left:38px;top:22px;width:12px;height:12px;background:#0e0e0e"></div>
<div class="a" style="left:54px;top:22px;width:12px;height:12px;background:#0e0e0e"></div>
<div class="a" style="left:70px;top:22px;width:12px;height:12px;background:#0e0e0e"></div>
<div class="a" style="left:86px;top:22px;width:12px;height:12px;background:#0e0e0e"></div>
<div class="a" style="left:6px;top:38px;width:12px;height:12px;background:#0e0e0e"></div>
<div class="a" style="left:22px;top:38px;width:12px;height:12px;background:#0e0e0e"></div>
<div class="a" style="left:38px;top:38px;width:12px;height:12px;background:#0e0e0e"></div>
<div class="a" style="left:54px;top:38px;width:12px;height:12px;background:#0e0e0e"></div>
<div class="a" style="left:70px;top:38px;width:12px;height:12px;background:#0e0e0e"></div>
<div class="a" style="left:86px;top:38px;width:12px;height:12px;background:#0e0e0e"></div>
<div class="a" style="left:6px;top:54px;width:12px;height:12px;background:#0e0e0e"></div>
<div class="a" style="left:22px;top:54px;width:12px;height:12px;background:#0e0e0e"></div>
<div class="a" style="left:38px;top:54px;width:12px;height:12px;background:#0e0e0e"></div>
<div class="a" style="left:54px;top:54px;width:12px;height:12px;background:#0e0e0e"></div>
<div class="a" style="left:70px;top:54px;width:12px;height:12px;background:#0e0e0e"></div>
<div class="a" style="left:86px;top:54px;width:12px;height:12px;background:#0e0e0e"></div>
<div class="a" style="left:6px;top:70px;width:12px;height:12px;background:#0e0e0e"></div>
<div class="a" style="left:22px;top:70px;width:12px;height:12px;background:#0e0e0e"></div>
<div class="a" style="left:38px;top:70px;width:12px;height:12px;background:#0e0e0e"></div>
<div class="a" style="left:54px;top:70px;width:12px;height:12px;background:#0e0e0e"></div>
<div class="a" style="left:70px;top:70px;width:12px;height:12px;background:#0e0e0e"></div>
<div class="a" style="left:86px;top:70px;width:12px;height:12px;background:#0e0e0e"></div>
<div class="a" style="left:6px;top:86px;width:12px;height:12px;background:#0e0e0e"></div>
<div class="a" style="left:22px;top:86px;width:12px;height:12px;background:#0e0e0e"></div>
<div class="a" style="left:38px;top:86px;width:12px;height:12px;background:#0e0e0e"></div>
<div class="a" style="left:54px;top:86px;width:12px;height:12px;background:#0e0e0e"></div>
<div class="a" style="left:70px;top:86px;width:12px;height:12px;background:#0e0e0e"></div>
<div class="a" style="left:86px;top:86px;width:12px;height:12px;background:#0e0e0e"></div>
</div>
<div class="t" style="left:0px;top:142.15px;font-size:14px;line-height:14px;color:#ffffff;font-weight:bold;width:178px;text-align:center;"><span style="letter-spacing:-1.1px">SECTEUR</span> 25</div>
</div>
<div class="a" style="left:869px;top:948px;width:180px;height:180px;border:1px solid #2a3346;background:#0a0f1c">
<div class="a" style="left:37px;top:20px;width:104px;height:104px;background:#000">
<div class="a" style="left:6px;top:6px;width:12px;height:12px;background:#0e0e0e"></div>
<div class="a" style="left:22px;top:6px;width:12px;height:12px;background:#0e0e0e"></div>
<div class="a" style="left:38px;top:6px;width:12px;height:12px;background:#0e0e0e"></div>
<div class="a" style="left:54px;top:6px;width:12px;height:12px;background:#0e0e0e"></div>
<div class="a" style="left:70px;top:6px;width:12px;height:12px;background:#0e0e0e"></div>
<div class="a" style="left:86px;top:6px;width:12px;height:12px;background:#0e0e0e"></div>
<div class="a" style="left:6px;top:22px;width:12px;height:12px;background:#0e0e0e"></div>
<div class="a" style="left:22px;top:22px;width:12px;height:12px;background:#0e0e0e"></div>
<div class="a" style="left:38px;top:22px;width:12px;height:12px;background:#0e0e0e"></div>
<div class="a" style="left:54px;top:22px;width:12px;height:12px;background:#0e0e0e"></div>
<div class="a" style="left:70px;top:22px;width:12px;height:12px;background:#0e0e0e"></div>
<div class="a" style="left:86px;top:22px;width:12px;height:12px;background:#0e0e0e"></div>
<div class="a" style="left:6px;top:38px;width:12px;height:12px;background:#0e0e0e"></div>
<div class="a" style="left:22px;top:38px;width:12px;height:12px;background:#0e0e0e"></div>
<div class="a" style="left:38px;top:38px;width:12px;height:12px;background:#0e0e0e"></div>
<div class="a" style="left:54px;top:38px;width:12px;height:12px;background:#0e0e0e"></div>
<div class="a" style="left:70px;top:38px;width:12px;height:12px;background:#0e0e0e"></div>
<div class="a" style="left:86px;top:38px;width:12px;height:12px;background:#0e0e0e"></div>
<div class="a" style="left:6px;top:54px;width:12px;height:12px;background:#0e0e0e"></div>
<div class="a" style="left:22px;top:54px;width:12px;height:12px;background:#0e0e0e"></div>
<div class="a" style="left:38px;top:54px;width:12px;height:12px;background:#0e0e0e"></div>
<div class="a" style="left:54px;top:54px;width:12px;height:12px;background:#0e0e0e"></div>
<div class="a" style="left:70px;top:54px;width:12px;height:12px;background:#0e0e0e"></div>
<div class="a" style="left:86px;top:54px;width:12px;height:12px;background:#0e0e0e"></div>
<div class="a" style="left:6px;top:70px;width:12px;height:12px;background:#0e0e0e"></div>
<div class="a" style="left:22px;top:70px;width:12px;height:12px;background:#0e0e0e"></div>
<div class="a" style="left:38px;top:70px;width:12px;height:12px;background:#0e0e0e"></div>
<div class="a" style="left:54px;top:70px;width:12px;height:12px;background:#0e0e0e"></div>
<div class="a" style="left:70px;top:70px;width:12px;height:12px;background:#0e0e0e"></div>
<div class="a" style="left:86px;top:70px;width:12px;height:12px;background:#0e0e0e"></div>
<div class="a" style="left:6px;top:86px;width:12px;height:12px;background:#0e0e0e"></div>
<div class="a" style="left:22px;top:86px;width:12px;height:12px;background:#0e0e0e"></div>
<div class="a" style="left:38px;top:86px;width:12px;height:12px;background:#0e0e0e"></div>
<div class="a" style="left:54px;top:86px;width:12px;height:12px;background:#0e0e0e"></div>
<div class="a" style="left:70px;top:86px;width:12px;height:12px;background:#0e0e0e"></div>
<div class="a" style="left:86px;top:86px;width:12px;height:12px;background:#0e0e0e"></div>
</div>
<div class="t" style="left:0px;top:142.15px;font-size:14px;line-height:14px;color:#ffffff;font-weight:bold;width:178px;text-align:center;"><span style="letter-spacing:-1.1px">SECTEUR</span> 26</div>
</div>
<div class="a" style="left:1064px;top:948px;width:180px;height:180px;border:1px solid #2a3346;background:#0a0f1c">
<div class="a" style="left:37px;top:20px;width:104px;height:104px;background:#000">
<div class="a" style="left:6px;top:6px;width:12px;height:12px;background:#0e0e0e"></div>
<div class="a" style="left:22px;top:6px;width:12px;height:12px;background:#0e0e0e"></div>
<div class="a" style="left:38px;top:6px;width:12px;height:12px;background:#0e0e0e"></div>
<div class="a" style="left:54px;top:6px;width:12px;height:12px;background:#0e0e0e"></div>
<div class="a" style="left:70px;top:6px;width:12px;height:12px;background:#0e0e0e"></div>
<div class="a" style="left:86px;top:6px;width:12px;height:12px;background:#0e0e0e"></div>
<div class="a" style="left:6px;top:22px;width:12px;height:12px;background:#0e0e0e"></div>
<div class="a" style="left:22px;top:22px;width:12px;height:12px;background:#0e0e0e"></div>
<div class="a" style="left:38px;top:22px;width:12px;height:12px;background:#0e0e0e"></div>
<div class="a" style="left:54px;top:22px;width:12px;height:12px;background:#0e0e0e"></div>
<div class="a" style="left:70px;top:22px;width:12px;height:12px;background:#0e0e0e"></div>
<div class="a" style="left:86px;top:22px;width:12px;height:12px;background:#0e0e0e"></div>
<div class="a" style="left:6px;top:38px;width:12px;height:12px;background:#0e0e0e"></div>
<div class="a" style="left:22px;top:38px;width:12px;height:12px;background:#0e0e0e"></div>
<div class="a" style="left:38px;top:38px;width:12px;height:12px;background:#0e0e0e"></div>
<div class="a" style="left:54px;top:38px;width:12px;height:12px;background:#0e0e0e"></div>
<div class="a" style="left:70px;top:38px;width:12px;height:12px;background:#0e0e0e"></div>
<div class="a" style="left:86px;top:38px;width:12px;height:12px;background:#0e0e0e"></div>
<div class="a" style="left:6px;top:54px;width:12px;height:12px;background:#0e0e0e"></div>
<div class="a" style="left:22px;top:54px;width:12px;height:12px;background:#0e0e0e"></div>
<div class="a" style="left:38px;top:54px;width:12px;height:12px;background:#0e0e0e"></div>
<div class="a" style="left:54px;top:54px;width:12px;height:12px;background:#0e0e0e"></div>
<div class="a" style="left:70px;top:54px;width:12px;height:12px;background:#0e0e0e"></div>
<div class="a" style="left:86px;top:54px;width:12px;height:12px;background:#0e0e0e"></div>
<div class="a" style="left:6px;top:70px;width:12px;height:12px;background:#0e0e0e"></div>
<div class="a" style="left:22px;top:70px;width:12px;height:12px;background:#0e0e0e"></div>
<div class="a" style="left:38px;top:70px;width:12px;height:12px;background:#0e0e0e"></div>
<div class="a" style="left:54px;top:70px;width:12px;height:12px;background:#0e0e0e"></div>
<div class="a" style="left:70px;top:70px;width:12px;height:12px;background:#0e0e0e"></div>
<div class="a" style="left:86px;top:70px;width:12px;height:12px;background:#0e0e0e"></div>
<div class="a" style="left:6px;top:86px;width:12px;height:12px;background:#0e0e0e"></div>
<div class="a" style="left:22px;top:86px;width:12px;height:12px;background:#0e0e0e"></div>
<div class="a" style="left:38px;top:86px;width:12px;height:12px;background:#0e0e0e"></div>
<div class="a" style="left:54px;top:86px;width:12px;height:12px;background:#0e0e0e"></div>
<div class="a" style="left:70px;top:86px;width:12px;height:12px;background:#0e0e0e"></div>
<div class="a" style="left:86px;top:86px;width:12px;height:12px;background:#0e0e0e"></div>
</div>
<div class="t" style="left:0px;top:142.15px;font-size:14px;line-height:14px;color:#ffffff;font-weight:bold;width:178px;text-align:center;"><span style="letter-spacing:-1.1px">SECTEUR</span> 27</div>
</div>
<div class="a" style="left:1259px;top:948px;width:180px;height:180px;border:1px solid #2a3346;background:#0a0f1c">
<div class="a" style="left:37px;top:20px;width:104px;height:104px;background:#000">
<div class="a" style="left:6px;top:6px;width:12px;height:12px;background:#0e0e0e"></div>
<div class="a" style="left:22px;top:6px;width:12px;height:12px;background:#0e0e0e"></div>
<div class="a" style="left:38px;top:6px;width:12px;height:12px;background:#0e0e0e"></div>
<div class="a" style="left:54px;top:6px;width:12px;height:12px;background:#0e0e0e"></div>
<div class="a" style="left:70px;top:6px;width:12px;height:12px;background:#0e0e0e"></div>
<div class="a" style="left:86px;top:6px;width:12px;height:12px;background:#0e0e0e"></div>
<div class="a" style="left:6px;top:22px;width:12px;height:12px;background:#0e0e0e"></div>
<div class="a" style="left:22px;top:22px;width:12px;height:12px;background:#0e0e0e"></div>
<div class="a" style="left:38px;top:22px;width:12px;height:12px;background:#0e0e0e"></div>
<div class="a" style="left:54px;top:22px;width:12px;height:12px;background:#0e0e0e"></div>
<div class="a" style="left:70px;top:22px;width:12px;height:12px;background:#0e0e0e"></div>
<div class="a" style="left:86px;top:22px;width:12px;height:12px;background:#0e0e0e"></div>
<div class="a" style="left:6px;top:38px;width:12px;height:12px;background:#0e0e0e"></div>
<div class="a" style="left:22px;top:38px;width:12px;height:12px;background:#0e0e0e"></div>
<div class="a" style="left:38px;top:38px;width:12px;height:12px;background:#0e0e0e"></div>
<div class="a" style="left:54px;top:38px;width:12px;height:12px;background:#0e0e0e"></div>
<div class="a" style="left:70px;top:38px;width:12px;height:12px;background:#0e0e0e"></div>
<div class="a" style="left:86px;top:38px;width:12px;height:12px;background:#0e0e0e"></div>
<div class="a" style="left:6px;top:54px;width:12px;height:12px;background:#0e0e0e"></div>
<div class="a" style="left:22px;top:54px;width:12px;height:12px;background:#0e0e0e"></div>
<div class="a" style="left:38px;top:54px;width:12px;height:12px;background:#0e0e0e"></div>
<div class="a" style="left:54px;top:54px;width:12px;height:12px;background:#0e0e0e"></div>
<div class="a" style="left:70px;top:54px;width:12px;height:12px;background:#0e0e0e"></div>
<div class="a" style="left:86px;top:54px;width:12px;height:12px;background:#0e0e0e"></div>
<div class="a" style="left:6px;top:70px;width:12px;height:12px;background:#0e0e0e"></div>
<div class="a" style="left:22px;top:70px;width:12px;height:12px;background:#0e0e0e"></div>
<div class="a" style="left:38px;top:70px;width:12px;height:12px;background:#0e0e0e"></div>
<div class="a" style="left:54px;top:70px;width:12px;height:12px;background:#0e0e0e"></div>
<div class="a" style="left:70px;top:70px;width:12px;height:12px;background:#0e0e0e"></div>
<div class="a" style="left:86px;top:70px;width:12px;height:12px;background:#0e0e0e"></div>
<div class="a" style="left:6px;top:86px;width:12px;height:12px;background:#0e0e0e"></div>
<div class="a" style="left:22px;top:86px;width:12px;height:12px;background:#0e0e0e"></div>
<div class="a" style="left:38px;top:86px;width:12px;height:12px;background:#0e0e0e"></div>
<div class="a" style="left:54px;top:86px;width:12px;height:12px;background:#0e0e0e"></div>
<div class="a" style="left:70px;top:86px;width:12px;height:12px;background:#0e0e0e"></div>
<div class="a" style="left:86px;top:86px;width:12px;height:12px;background:#0e0e0e"></div>
</div>
<div class="t" style="left:0px;top:142.15px;font-size:14px;line-height:14px;color:#ffffff;font-weight:bold;width:178px;text-align:center;"><span style="letter-spacing:-1.1px">SECTEUR</span> 28</div>
</div>
<div class="a" style="left:1454px;top:948px;width:180px;height:180px;border:1px solid #2a3346;background:#0a0f1c">
<div class="a" style="left:37px;top:20px;width:104px;height:104px;background:#000">
<div class="a" style="left:6px;top:6px;width:12px;height:12px;background:#0e0e0e"></div>
<div class="a" style="left:22px;top:6px;width:12px;height:12px;background:#0e0e0e"></div>
<div class="a" style="left:38px;top:6px;width:12px;height:12px;background:#0e0e0e"></div>
<div class="a" style="left:54px;top:6px;width:12px;height:12px;background:#0e0e0e"></div>
<div class="a" style="left:70px;top:6px;width:12px;height:12px;background:#0e0e0e"></div>
<div class="a" style="left:86px;top:6px;width:12px;height:12px;background:#0e0e0e"></div>
<div class="a" style="left:6px;top:22px;width:12px;height:12px;background:#0e0e0e"></div>
<div class="a" style="left:22px;top:22px;width:12px;height:12px;background:#0e0e0e"></div>
<div class="a" style="left:38px;top:22px;width:12px;height:12px;background:#0e0e0e"></div>
<div class="a" style="left:54px;top:22px;width:12px;height:12px;background:#0e0e0e"></div>
<div class="a" style="left:70px;top:22px;width:12px;height:12px;background:#0e0e0e"></div>
<div class="a" style="left:86px;top:22px;width:12px;height:12px;background:#0e0e0e"></div>
<div class="a" style="left:6px;top:38px;width:12px;height:12px;background:#0e0e0e"></div>
<div class="a" style="left:22px;top:38px;width:12px;height:12px;background:#0e0e0e"></div>
<div class="a" style="left:38px;top:38px;width:12px;height:12px;background:#0e0e0e"></div>
<div class="a" style="left:54px;top:38px;width:12px;height:12px;background:#0e0e0e"></div>
<div class="a" style="left:70px;top:38px;width:12px;height:12px;background:#0e0e0e"></div>
<div class="a" style="left:86px;top:38px;width:12px;height:12px;background:#0e0e0e"></div>
<div class="a" style="left:6px;top:54px;width:12px;height:12px;background:#0e0e0e"></div>
<div class="a" style="left:22px;top:54px;width:12px;height:12px;background:#0e0e0e"></div>
<div class="a" style="left:38px;top:54px;width:12px;height:12px;background:#0e0e0e"></div>
<div class="a" style="left:54px;top:54px;width:12px;height:12px;background:#0e0e0e"></div>
<div class="a" style="left:70px;top:54px;width:12px;height:12px;background:#0e0e0e"></div>
<div class="a" style="left:86px;top:54px;width:12px;height:12px;background:#0e0e0e"></div>
<div class="a" style="left:6px;top:70px;width:12px;height:12px;background:#0e0e0e"></div>
<div class="a" style="left:22px;top:70px;width:12px;height:12px;background:#0e0e0e"></div>
<div class="a" style="left:38px;top:70px;width:12px;height:12px;background:#0e0e0e"></div>
<div class="a" style="left:54px;top:70px;width:12px;height:12px;background:#0e0e0e"></div>
<div class="a" style="left:70px;top:70px;width:12px;height:12px;background:#0e0e0e"></div>
<div class="a" style="left:86px;top:70px;width:12px;height:12px;background:#0e0e0e"></div>
<div class="a" style="left:6px;top:86px;width:12px;height:12px;background:#0e0e0e"></div>
<div class="a" style="left:22px;top:86px;width:12px;height:12px;background:#0e0e0e"></div>
<div class="a" style="left:38px;top:86px;width:12px;height:12px;background:#0e0e0e"></div>
<div class="a" style="left:54px;top:86px;width:12px;height:12px;background:#0e0e0e"></div>
<div class="a" style="left:70px;top:86px;width:12px;height:12px;background:#0e0e0e"></div>
<div class="a" style="left:86px;top:86px;width:12px;height:12px;background:#0e0e0e"></div>
</div>
<div class="t" style="left:0px;top:142.15px;font-size:14px;line-height:14px;color:#ffffff;font-weight:bold;width:178px;text-align:center;"><span style="letter-spacing:-1.1px">SECTEUR</span> 29</div>
</div>
<div class="a" style="left:1649px;top:948px;width:180px;height:180px;border:1px solid #2a3346;background:#0a0f1c">
<div class="a" style="left:37px;top:20px;width:104px;height:104px;background:#000">
<div class="a" style="left:6px;top:6px;width:12px;height:12px;background:#0e0e0e"></div>
<div class="a" style="left:22px;top:6px;width:12px;height:12px;background:#0e0e0e"></div>
<div class="a" style="left:38px;top:6px;width:12px;height:12px;background:#0e0e0e"></div>
<div class="a" style="left:54px;top:6px;width:12px;height:12px;background:#0e0e0e"></div>
<div class="a" style="left:70px;top:6px;width:12px;height:12px;background:#0e0e0e"></div>
<div class="a" style="left:86px;top:6px;width:12px;height:12px;background:#0e0e0e"></div>
<div class="a" style="left:6px;top:22px;width:12px;height:12px;background:#0e0e0e"></div>
<div class="a" style="left:22px;top:22px;width:12px;height:12px;background:#0e0e0e"></div>
<div class="a" style="left:38px;top:22px;width:12px;height:12px;background:#0e0e0e"></div>
<div class="a" style="left:54px;top:22px;width:12px;height:12px;background:#0e0e0e"></div>
<div class="a" style="left:70px;top:22px;width:12px;height:12px;background:#0e0e0e"></div>
<div class="a" style="left:86px;top:22px;width:12px;height:12px;background:#0e0e0e"></div>
<div class="a" style="left:6px;top:38px;width:12px;height:12px;background:#0e0e0e"></div>
<div class="a" style="left:22px;top:38px;width:12px;height:12px;background:#0e0e0e"></div>
<div class="a" style="left:38px;top:38px;width:12px;height:12px;background:#0e0e0e"></div>
<div class="a" style="left:54px;top:38px;width:12px;height:12px;background:#0e0e0e"></div>
<div class="a" style="left:70px;top:38px;width:12px;height:12px;background:#0e0e0e"></div>
<div class="a" style="left:86px;top:38px;width:12px;height:12px;background:#0e0e0e"></div>
<div class="a" style="left:6px;top:54px;width:12px;height:12px;background:#0e0e0e"></div>
<div class="a" style="left:22px;top:54px;width:12px;height:12px;background:#0e0e0e"></div>
<div class="a" style="left:38px;top:54px;width:12px;height:12px;background:#0e0e0e"></div>
<div class="a" style="left:54px;top:54px;width:12px;height:12px;background:#0e0e0e"></div>
<div class="a" style="left:70px;top:54px;width:12px;height:12px;background:#0e0e0e"></div>
<div class="a" style="left:86px;top:54px;width:12px;height:12px;background:#0e0e0e"></div>
<div class="a" style="left:6px;top:70px;width:12px;height:12px;background:#0e0e0e"></div>
<div class="a" style="left:22px;top:70px;width:12px;height:12px;background:#0e0e0e"></div>
<div class="a" style="left:38px;top:70px;width:12px;height:12px;background:#0e0e0e"></div>
<div class="a" style="left:54px;top:70px;width:12px;height:12px;background:#0e0e0e"></div>
<div class="a" style="left:70px;top:70px;width:12px;height:12px;background:#0e0e0e"></div>
<div class="a" style="left:86px;top:70px;width:12px;height:12px;background:#0e0e0e"></div>
<div class="a" style="left:6px;top:86px;width:12px;height:12px;background:#0e0e0e"></div>
<div class="a" style="left:22px;top:86px;width:12px;height:12px;background:#0e0e0e"></div>
<div class="a" style="left:38px;top:86px;width:12px;height:12px;background:#0e0e0e"></div>
<div class="a" style="left:54px;top:86px;width:12px;height:12px;background:#0e0e0e"></div>
<div class="a" style="left:70px;top:86px;width:12px;height:12px;background:#0e0e0e"></div>
<div class="a" style="left:86px;top:86px;width:12px;height:12px;background:#0e0e0e"></div>
</div>
<div class="t" style="left:0px;top:142.15px;font-size:14px;line-height:14px;color:#ffffff;font-weight:bold;width:178px;text-align:center;"><span style="letter-spacing:-1.1px">SECTEUR</span> 30</div>
</div>
<div class="a" style="left:674px;top:1143px;width:180px;height:180px;border:1px solid #2a3346;background:#0a0f1c">
<div class="a" style="left:37px;top:20px;width:104px;height:104px;background:#000">
<div class="a" style="left:6px;top:6px;width:12px;height:12px;background:#0e0e0e"></div>
<div class="a" style="left:22px;top:6px;width:12px;height:12px;background:#0e0e0e"></div>
<div class="a" style="left:38px;top:6px;width:12px;height:12px;background:#0e0e0e"></div>
<div class="a" style="left:54px;top:6px;width:12px;height:12px;background:#0e0e0e"></div>
<div class="a" style="left:70px;top:6px;width:12px;height:12px;background:#0e0e0e"></div>
<div class="a" style="left:86px;top:6px;width:12px;height:12px;background:#0e0e0e"></div>
<div class="a" style="left:6px;top:22px;width:12px;height:12px;background:#0e0e0e"></div>
<div class="a" style="left:22px;top:22px;width:12px;height:12px;background:#0e0e0e"></div>
<div class="a" style="left:38px;top:22px;width:12px;height:12px;background:#0e0e0e"></div>
<div class="a" style="left:54px;top:22px;width:12px;height:12px;background:#0e0e0e"></div>
<div class="a" style="left:70px;top:22px;width:12px;height:12px;background:#0e0e0e"></div>
<div class="a" style="left:86px;top:22px;width:12px;height:12px;background:#0e0e0e"></div>
<div class="a" style="left:6px;top:38px;width:12px;height:12px;background:#0e0e0e"></div>
<div class="a" style="left:22px;top:38px;width:12px;height:12px;background:#0e0e0e"></div>
<div class="a" style="left:38px;top:38px;width:12px;height:12px;background:#0e0e0e"></div>
<div class="a" style="left:54px;top:38px;width:12px;height:12px;background:#0e0e0e"></div>
<div class="a" style="left:70px;top:38px;width:12px;height:12px;background:#0e0e0e"></div>
<div class="a" style="left:86px;top:38px;width:12px;height:12px;background:#0e0e0e"></div>
<div class="a" style="left:6px;top:54px;width:12px;height:12px;background:#0e0e0e"></div>
<div class="a" style="left:22px;top:54px;width:12px;height:12px;background:#0e0e0e"></div>
<div class="a" style="left:38px;top:54px;width:12px;height:12px;background:#0e0e0e"></div>
<div class="a" style="left:54px;top:54px;width:12px;height:12px;background:#0e0e0e"></div>
<div class="a" style="left:70px;top:54px;width:12px;height:12px;background:#0e0e0e"></div>
<div class="a" style="left:86px;top:54px;width:12px;height:12px;background:#0e0e0e"></div>
<div class="a" style="left:6px;top:70px;width:12px;height:12px;background:#0e0e0e"></div>
<div class="a" style="left:22px;top:70px;width:12px;height:12px;background:#0e0e0e"></div>
<div class="a" style="left:38px;top:70px;width:12px;height:12px;background:#0e0e0e"></div>
<div class="a" style="left:54px;top:70px;width:12px;height:12px;background:#0e0e0e"></div>
<div class="a" style="left:70px;top:70px;width:12px;height:12px;background:#0e0e0e"></div>
<div class="a" style="left:86px;top:70px;width:12px;height:12px;background:#0e0e0e"></div>
<div class="a" style="left:6px;top:86px;width:12px;height:12px;background:#0e0e0e"></div>
<div class="a" style="left:22px;top:86px;width:12px;height:12px;background:#0e0e0e"></div>
<div class="a" style="left:38px;top:86px;width:12px;height:12px;background:#0e0e0e"></div>
<div class="a" style="left:54px;top:86px;width:12px;height:12px;background:#0e0e0e"></div>
<div class="a" style="left:70px;top:86px;width:12px;height:12px;background:#0e0e0e"></div>
<div class="a" style="left:86px;top:86px;width:12px;height:12px;background:#0e0e0e"></div>
</div>
<div class="t" style="left:0px;top:142.15px;font-size:14px;line-height:14px;color:#ffffff;font-weight:bold;width:178px;text-align:center;"><span style="letter-spacing:-1.1px">SECTEUR</span> 31</div>
</div>
<div class="a" style="left:869px;top:1143px;width:180px;height:180px;border:1px solid #2a3346;background:#0a0f1c">
<div class="a" style="left:37px;top:20px;width:104px;height:104px;background:#000">
<div class="a" style="left:6px;top:6px;width:12px;height:12px;background:#0e0e0e"></div>
<div class="a" style="left:22px;top:6px;width:12px;height:12px;background:#0e0e0e"></div>
<div class="a" style="left:38px;top:6px;width:12px;height:12px;background:#0e0e0e"></div>
<div class="a" style="left:54px;top:6px;width:12px;height:12px;background:#0e0e0e"></div>
<div class="a" style="left:70px;top:6px;width:12px;height:12px;background:#0e0e0e"></div>
<div class="a" style="left:86px;top:6px;width:12px;height:12px;background:#0e0e0e"></div>
<div class="a" style="left:6px;top:22px;width:12px;height:12px;background:#0e0e0e"></div>
<div class="a" style="left:22px;top:22px;width:12px;height:12px;background:#0e0e0e"></div>
<div class="a" style="left:38px;top:22px;width:12px;height:12px;background:#0e0e0e"></div>
<div class="a" style="left:54px;top:22px;width:12px;height:12px;background:#0e0e0e"></div>
<div class="a" style="left:70px;top:22px;width:12px;height:12px;background:#0e0e0e"></div>
<div class="a" style="left:86px;top:22px;width:12px;height:12px;background:#0e0e0e"></div>
<div class="a" style="left:6px;top:38px;width:12px;height:12px;background:#0e0e0e"></div>
<div class="a" style="left:22px;top:38px;width:12px;height:12px;background:#0e0e0e"></div>
<div class="a" style="left:38px;top:38px;width:12px;height:12px;background:#0e0e0e"></div>
<div class="a" style="left:54px;top:38px;width:12px;height:12px;background:#0e0e0e"></div>
<div class="a" style="left:70px;top:38px;width:12px;height:12px;background:#0e0e0e"></div>
<div class="a" style="left:86px;top:38px;width:12px;height:12px;background:#0e0e0e"></div>
<div class="a" style="left:6px;top:54px;width:12px;height:12px;background:#0e0e0e"></div>
<div class="a" style="left:22px;top:54px;width:12px;height:12px;background:#0e0e0e"></div>
<div class="a" style="left:38px;top:54px;width:12px;height:12px;background:#0e0e0e"></div>
<div class="a" style="left:54px;top:54px;width:12px;height:12px;background:#0e0e0e"></div>
<div class="a" style="left:70px;top:54px;width:12px;height:12px;background:#0e0e0e"></div>
<div class="a" style="left:86px;top:54px;width:12px;height:12px;background:#0e0e0e"></div>
<div class="a" style="left:6px;top:70px;width:12px;height:12px;background:#0e0e0e"></div>
<div class="a" style="left:22px;top:70px;width:12px;height:12px;background:#0e0e0e"></div>
<div class="a" style="left:38px;top:70px;width:12px;height:12px;background:#0e0e0e"></div>
<div class="a" style="left:54px;top:70px;width:12px;height:12px;background:#0e0e0e"></div>
<div class="a" style="left:70px;top:70px;width:12px;height:12px;background:#0e0e0e"></div>
<div class="a" style="left:86px;top:70px;width:12px;height:12px;background:#0e0e0e"></div>
<div class="a" style="left:6px;top:86px;width:12px;height:12px;background:#0e0e0e"></div>
<div class="a" style="left:22px;top:86px;width:12px;height:12px;background:#0e0e0e"></div>
<div class="a" style="left:38px;top:86px;width:12px;height:12px;background:#0e0e0e"></div>
<div class="a" style="left:54px;top:86px;width:12px;height:12px;background:#0e0e0e"></div>
<div class="a" style="left:70px;top:86px;width:12px;height:12px;background:#0e0e0e"></div>
<div class="a" style="left:86px;top:86px;width:12px;height:12px;background:#0e0e0e"></div>
</div>
<div class="t" style="left:0px;top:142.15px;font-size:14px;line-height:14px;color:#ffffff;font-weight:bold;width:178px;text-align:center;"><span style="letter-spacing:-1.1px">SECTEUR</span> 32</div>
</div>
<div class="a" style="left:1064px;top:1143px;width:180px;height:180px;border:1px solid #2a3346;background:#0a0f1c">
<div class="a" style="left:37px;top:20px;width:104px;height:104px;background:#000">
<div class="a" style="left:6px;top:6px;width:12px;height:12px;background:#0e0e0e"></div>
<div class="a" style="left:22px;top:6px;width:12px;height:12px;background:#0e0e0e"></div>
<div class="a" style="left:38px;top:6px;width:12px;height:12px;background:#0e0e0e"></div>
<div class="a" style="left:54px;top:6px;width:12px;height:12px;background:#0e0e0e"></div>
<div class="a" style="left:70px;top:6px;width:12px;height:12px;background:#0e0e0e"></div>
<div class="a" style="left:86px;top:6px;width:12px;height:12px;background:#0e0e0e"></div>
<div class="a" style="left:6px;top:22px;width:12px;height:12px;background:#0e0e0e"></div>
<div class="a" style="left:22px;top:22px;width:12px;height:12px;background:#0e0e0e"></div>
<div class="a" style="left:38px;top:22px;width:12px;height:12px;background:#0e0e0e"></div>
<div class="a" style="left:54px;top:22px;width:12px;height:12px;background:#0e0e0e"></div>
<div class="a" style="left:70px;top:22px;width:12px;height:12px;background:#0e0e0e"></div>
<div class="a" style="left:86px;top:22px;width:12px;height:12px;background:#0e0e0e"></div>
<div class="a" style="left:6px;top:38px;width:12px;height:12px;background:#0e0e0e"></div>
<div class="a" style="left:22px;top:38px;width:12px;height:12px;background:#0e0e0e"></div>
<div class="a" style="left:38px;top:38px;width:12px;height:12px;background:#0e0e0e"></div>
<div class="a" style="left:54px;top:38px;width:12px;height:12px;background:#0e0e0e"></div>
<div class="a" style="left:70px;top:38px;width:12px;height:12px;background:#0e0e0e"></div>
<div class="a" style="left:86px;top:38px;width:12px;height:12px;background:#0e0e0e"></div>
<div class="a" style="left:6px;top:54px;width:12px;height:12px;background:#0e0e0e"></div>
<div class="a" style="left:22px;top:54px;width:12px;height:12px;background:#0e0e0e"></div>
<div class="a" style="left:38px;top:54px;width:12px;height:12px;background:#0e0e0e"></div>
<div class="a" style="left:54px;top:54px;width:12px;height:12px;background:#0e0e0e"></div>
<div class="a" style="left:70px;top:54px;width:12px;height:12px;background:#0e0e0e"></div>
<div class="a" style="left:86px;top:54px;width:12px;height:12px;background:#0e0e0e"></div>
<div class="a" style="left:6px;top:70px;width:12px;height:12px;background:#0e0e0e"></div>
<div class="a" style="left:22px;top:70px;width:12px;height:12px;background:#0e0e0e"></div>
<div class="a" style="left:38px;top:70px;width:12px;height:12px;background:#0e0e0e"></div>
<div class="a" style="left:54px;top:70px;width:12px;height:12px;background:#0e0e0e"></div>
<div class="a" style="left:70px;top:70px;width:12px;height:12px;background:#0e0e0e"></div>
<div class="a" style="left:86px;top:70px;width:12px;height:12px;background:#0e0e0e"></div>
<div class="a" style="left:6px;top:86px;width:12px;height:12px;background:#0e0e0e"></div>
<div class="a" style="left:22px;top:86px;width:12px;height:12px;background:#0e0e0e"></div>
<div class="a" style="left:38px;top:86px;width:12px;height:12px;background:#0e0e0e"></div>
<div class="a" style="left:54px;top:86px;width:12px;height:12px;background:#0e0e0e"></div>
<div class="a" style="left:70px;top:86px;width:12px;height:12px;background:#0e0e0e"></div>
<div class="a" style="left:86px;top:86px;width:12px;height:12px;background:#0e0e0e"></div>
</div>
<div class="t" style="left:0px;top:142.15px;font-size:14px;line-height:14px;color:#ffffff;font-weight:bold;width:178px;text-align:center;"><span style="letter-spacing:-1.1px">SECTEUR</span> 33</div>
</div>
<div class="a" style="left:1259px;top:1143px;width:180px;height:180px;border:1px solid #2a3346;background:#0a0f1c">
<div class="a" style="left:37px;top:20px;width:104px;height:104px;background:#000">
<div class="a" style="left:6px;top:6px;width:12px;height:12px;background:#0e0e0e"></div>
<div class="a" style="left:22px;top:6px;width:12px;height:12px;background:#0e0e0e"></div>
<div class="a" style="left:38px;top:6px;width:12px;height:12px;background:#0e0e0e"></div>
<div class="a" style="left:54px;top:6px;width:12px;height:12px;background:#0e0e0e"></div>
<div class="a" style="left:70px;top:6px;width:12px;height:12px;background:#0e0e0e"></div>
<div class="a" style="left:86px;top:6px;width:12px;height:12px;background:#0e0e0e"></div>
<div class="a" style="left:6px;top:22px;width:12px;height:12px;background:#0e0e0e"></div>
<div class="a" style="left:22px;top:22px;width:12px;height:12px;background:#0e0e0e"></div>
<div class="a" style="left:38px;top:22px;width:12px;height:12px;background:#0e0e0e"></div>
<div class="a" style="left:54px;top:22px;width:12px;height:12px;background:#0e0e0e"></div>
<div class="a" style="left:70px;top:22px;width:12px;height:12px;background:#0e0e0e"></div>
<div class="a" style="left:86px;top:22px;width:12px;height:12px;background:#0e0e0e"></div>
<div class="a" style="left:6px;top:38px;width:12px;height:12px;background:#0e0e0e"></div>
<div class="a" style="left:22px;top:38px;width:12px;height:12px;background:#0e0e0e"></div>
<div class="a" style="left:38px;top:38px;width:12px;height:12px;background:#0e0e0e"></div>
<div class="a" style="left:54px;top:38px;width:12px;height:12px;background:#0e0e0e"></div>
<div class="a" style="left:70px;top:38px;width:12px;height:12px;background:#0e0e0e"></div>
<div class="a" style="left:86px;top:38px;width:12px;height:12px;background:#0e0e0e"></div>
<div class="a" style="left:6px;top:54px;width:12px;height:12px;background:#0e0e0e"></div>
<div class="a" style="left:22px;top:54px;width:12px;height:12px;background:#0e0e0e"></div>
<div class="a" style="left:38px;top:54px;width:12px;height:12px;background:#0e0e0e"></div>
<div class="a" style="left:54px;top:54px;width:12px;height:12px;background:#0e0e0e"></div>
<div class="a" style="left:70px;top:54px;width:12px;height:12px;background:#0e0e0e"></div>
<div class="a" style="left:86px;top:54px;width:12px;height:12px;background:#0e0e0e"></div>
<div class="a" style="left:6px;top:70px;width:12px;height:12px;background:#0e0e0e"></div>
<div class="a" style="left:22px;top:70px;width:12px;height:12px;background:#0e0e0e"></div>
<div class="a" style="left:38px;top:70px;width:12px;height:12px;background:#0e0e0e"></div>
<div class="a" style="left:54px;top:70px;width:12px;height:12px;background:#0e0e0e"></div>
<div class="a" style="left:70px;top:70px;width:12px;height:12px;background:#0e0e0e"></div>
<div class="a" style="left:86px;top:70px;width:12px;height:12px;background:#0e0e0e"></div>
<div class="a" style="left:6px;top:86px;width:12px;height:12px;background:#0e0e0e"></div>
<div class="a" style="left:22px;top:86px;width:12px;height:12px;background:#0e0e0e"></div>
<div class="a" style="left:38px;top:86px;width:12px;height:12px;background:#0e0e0e"></div>
<div class="a" style="left:54px;top:86px;width:12px;height:12px;background:#0e0e0e"></div>
<div class="a" style="left:70px;top:86px;width:12px;height:12px;background:#0e0e0e"></div>
<div class="a" style="left:86px;top:86px;width:12px;height:12px;background:#0e0e0e"></div>
</div>
<div class="t" style="left:0px;top:142.15px;font-size:14px;line-height:14px;color:#ffffff;font-weight:bold;width:178px;text-align:center;"><span style="letter-spacing:-1.1px">SECTEUR</span> 34</div>
</div>
<div class="a" style="left:1454px;top:1143px;width:180px;height:180px;border:1px solid #2a3346;background:#0a0f1c">
<div class="a" style="left:37px;top:20px;width:104px;height:104px;background:#000">
<div class="a" style="left:6px;top:6px;width:12px;height:12px;background:#0e0e0e"></div>
<div class="a" style="left:22px;top:6px;width:12px;height:12px;background:#0e0e0e"></div>
<div class="a" style="left:38px;top:6px;width:12px;height:12px;background:#0e0e0e"></div>
<div class="a" style="left:54px;top:6px;width:12px;height:12px;background:#0e0e0e"></div>
<div class="a" style="left:70px;top:6px;width:12px;height:12px;background:#0e0e0e"></div>
<div class="a" style="left:86px;top:6px;width:12px;height:12px;background:#0e0e0e"></div>
<div class="a" style="left:6px;top:22px;width:12px;height:12px;background:#0e0e0e"></div>
<div class="a" style="left:22px;top:22px;width:12px;height:12px;background:#0e0e0e"></div>
<div class="a" style="left:38px;top:22px;width:12px;height:12px;background:#0e0e0e"></div>
<div class="a" style="left:54px;top:22px;width:12px;height:12px;background:#0e0e0e"></div>
<div class="a" style="left:70px;top:22px;width:12px;height:12px;background:#0e0e0e"></div>
<div class="a" style="left:86px;top:22px;width:12px;height:12px;background:#0e0e0e"></div>
<div class="a" style="left:6px;top:38px;width:12px;height:12px;background:#0e0e0e"></div>
<div class="a" style="left:22px;top:38px;width:12px;height:12px;background:#0e0e0e"></div>
<div class="a" style="left:38px;top:38px;width:12px;height:12px;background:#0e0e0e"></div>
<div class="a" style="left:54px;top:38px;width:12px;height:12px;background:#0e0e0e"></div>
<div class="a" style="left:70px;top:38px;width:12px;height:12px;background:#0e0e0e"></div>
<div class="a" style="left:86px;top:38px;width:12px;height:12px;background:#0e0e0e"></div>
<div class="a" style="left:6px;top:54px;width:12px;height:12px;background:#0e0e0e"></div>
<div class="a" style="left:22px;top:54px;width:12px;height:12px;background:#0e0e0e"></div>
<div class="a" style="left:38px;top:54px;width:12px;height:12px;background:#0e0e0e"></div>
<div class="a" style="left:54px;top:54px;width:12px;height:12px;background:#0e0e0e"></div>
<div class="a" style="left:70px;top:54px;width:12px;height:12px;background:#0e0e0e"></div>
<div class="a" style="left:86px;top:54px;width:12px;height:12px;background:#0e0e0e"></div>
<div class="a" style="left:6px;top:70px;width:12px;height:12px;background:#0e0e0e"></div>
<div class="a" style="left:22px;top:70px;width:12px;height:12px;background:#0e0e0e"></div>
<div class="a" style="left:38px;top:70px;width:12px;height:12px;background:#0e0e0e"></div>
<div class="a" style="left:54px;top:70px;width:12px;height:12px;background:#0e0e0e"></div>
<div class="a" style="left:70px;top:70px;width:12px;height:12px;background:#0e0e0e"></div>
<div class="a" style="left:86px;top:70px;width:12px;height:12px;background:#0e0e0e"></div>
<div class="a" style="left:6px;top:86px;width:12px;height:12px;background:#0e0e0e"></div>
<div class="a" style="left:22px;top:86px;width:12px;height:12px;background:#0e0e0e"></div>
<div class="a" style="left:38px;top:86px;width:12px;height:12px;background:#0e0e0e"></div>
<div class="a" style="left:54px;top:86px;width:12px;height:12px;background:#0e0e0e"></div>
<div class="a" style="left:70px;top:86px;width:12px;height:12px;background:#0e0e0e"></div>
<div class="a" style="left:86px;top:86px;width:12px;height:12px;background:#0e0e0e"></div>
</div>
<div class="t" style="left:0px;top:142.15px;font-size:14px;line-height:14px;color:#ffffff;font-weight:bold;width:178px;text-align:center;"><span style="letter-spacing:-1.1px">SECTEUR</span> 35</div>
</div>
<div class="a" style="left:1649px;top:1143px;width:180px;height:180px;border:1px solid #2a3346;background:#0a0f1c">
<div class="a" style="left:37px;top:20px;width:104px;height:104px;background:#000">
<div class="a" style="left:6px;top:6px;width:12px;height:12px;background:#0e0e0e"></div>
<div class="a" style="left:22px;top:6px;width:12px;height:12px;background:#0e0e0e"></div>
<div class="a" style="left:38px;top:6px;width:12px;height:12px;background:#0e0e0e"></div>
<div class="a" style="left:54px;top:6px;width:12px;height:12px;background:#0e0e0e"></div>
<div class="a" style="left:70px;top:6px;width:12px;height:12px;background:#0e0e0e"></div>
<div class="a" style="left:86px;top:6px;width:12px;height:12px;background:#0e0e0e"></div>
<div class="a" style="left:6px;top:22px;width:12px;height:12px;background:#0e0e0e"></div>
<div class="a" style="left:22px;top:22px;width:12px;height:12px;background:#0e0e0e"></div>
<div class="a" style="left:38px;top:22px;width:12px;height:12px;background:#0e0e0e"></div>
<div class="a" style="left:54px;top:22px;width:12px;height:12px;background:#0e0e0e"></div>
<div class="a" style="left:70px;top:22px;width:12px;height:12px;background:#0e0e0e"></div>
<div class="a" style="left:86px;top:22px;width:12px;height:12px;background:#0e0e0e"></div>
<div class="a" style="left:6px;top:38px;width:12px;height:12px;background:#0e0e0e"></div>
<div class="a" style="left:22px;top:38px;width:12px;height:12px;background:#0e0e0e"></div>
<div class="a" style="left:38px;top:38px;width:12px;height:12px;background:#0e0e0e"></div>
<div class="a" style="left:54px;top:38px;width:12px;height:12px;background:#0e0e0e"></div>
<div class="a" style="left:70px;top:38px;width:12px;height:12px;background:#0e0e0e"></div>
<div class="a" style="left:86px;top:38px;width:12px;height:12px;background:#0e0e0e"></div>
<div class="a" style="left:6px;top:54px;width:12px;height:12px;background:#0e0e0e"></div>
<div class="a" style="left:22px;top:54px;width:12px;height:12px;background:#0e0e0e"></div>
<div class="a" style="left:38px;top:54px;width:12px;height:12px;background:#0e0e0e"></div>
<div class="a" style="left:54px;top:54px;width:12px;height:12px;background:#0e0e0e"></div>
<div class="a" style="left:70px;top:54px;width:12px;height:12px;background:#0e0e0e"></div>
<div class="a" style="left:86px;top:54px;width:12px;height:12px;background:#0e0e0e"></div>
<div class="a" style="left:6px;top:70px;width:12px;height:12px;background:#0e0e0e"></div>
<div class="a" style="left:22px;top:70px;width:12px;height:12px;background:#0e0e0e"></div>
<div class="a" style="left:38px;top:70px;width:12px;height:12px;background:#0e0e0e"></div>
<div class="a" style="left:54px;top:70px;width:12px;height:12px;background:#0e0e0e"></div>
<div class="a" style="left:70px;top:70px;width:12px;height:12px;background:#0e0e0e"></div>
<div class="a" style="left:86px;top:70px;width:12px;height:12px;background:#0e0e0e"></div>
<div class="a" style="left:6px;top:86px;width:12px;height:12px;background:#0e0e0e"></div>
<div class="a" style="left:22px;top:86px;width:12px;height:12px;background:#0e0e0e"></div>
<div class="a" style="left:38px;top:86px;width:12px;height:12px;background:#0e0e0e"></div>
<div class="a" style="left:54px;top:86px;width:12px;height:12px;background:#0e0e0e"></div>
<div class="a" style="left:70px;top:86px;width:12px;height:12px;background:#0e0e0e"></div>
<div class="a" style="left:86px;top:86px;width:12px;height:12px;background:#0e0e0e"></div>
</div>
<div class="t" style="left:0px;top:142.15px;font-size:14px;line-height:14px;color:#ffffff;font-weight:bold;width:178px;text-align:center;"><span style="letter-spacing:-1.1px">SECTEUR</span> 36</div>
</div>
</div>
<div class="a" style="left:2504px;top:121px;width:15px;height:1177px;background:#2b2b2b"></div>
<svg style="left:2506px;top:126px" width="11" height="7" viewBox="0 0 11 7"><path d="M0.5 6.2 L5.5 0.8 L10.5 6.2Z" fill="#a8a8a8"/></svg>
<div class="a" style="left:2507px;top:139px;width:9px;height:984px;background:#9f9f9f;border-radius:4.5px"></div>
<svg style="left:2506px;top:1285px" width="11" height="7" viewBox="0 0 11 7"><path d="M0.5 0.8 L5.5 6.2 L10.5 0.8Z" fill="#a8a8a8"/></svg>
</body></html>
